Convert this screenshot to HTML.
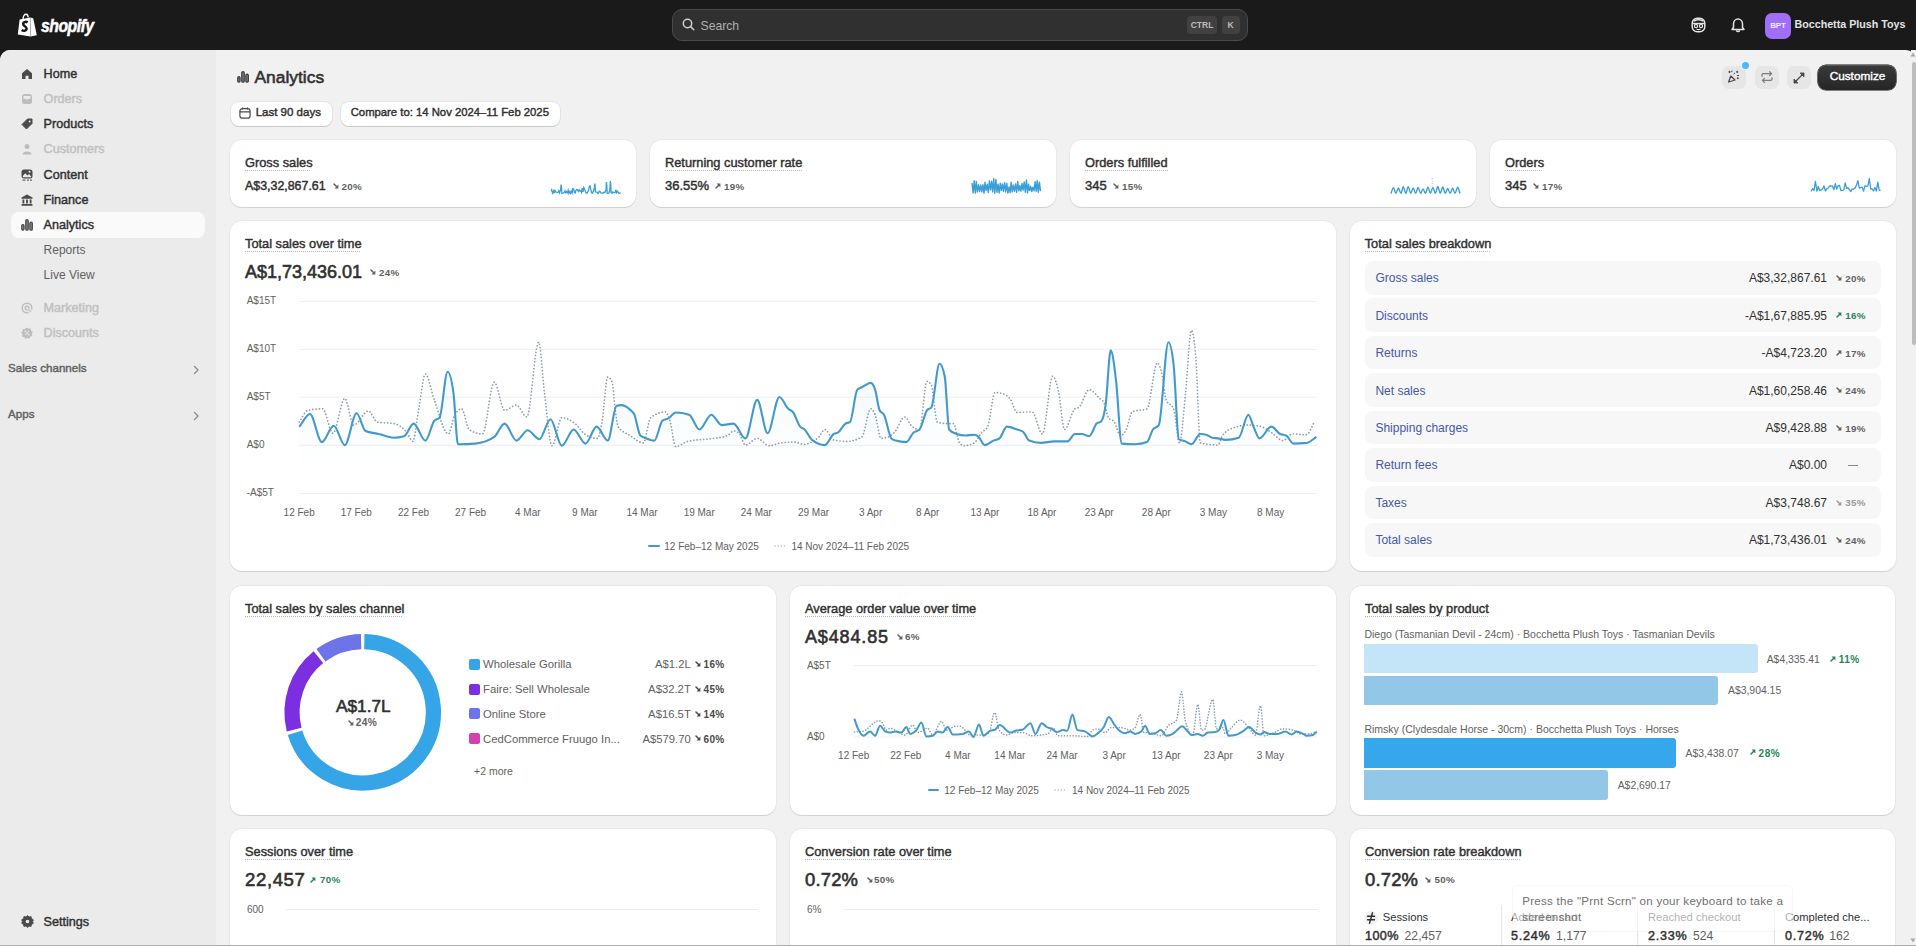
<!DOCTYPE html>
<html><head><meta charset="utf-8">
<style>
*{box-sizing:border-box;margin:0;padding:0}
html,body{width:1916px;height:946px;overflow:hidden}
body{background:#f1f1f1;font-family:"Liberation Sans",sans-serif;color:#303030;position:relative}
.abs{position:absolute}
.t{position:absolute;white-space:nowrap}
.card{position:absolute;background:#fff;border-radius:12px;box-shadow:0 1px 0 rgba(0,0,0,0.10),0 0 0 1px rgba(0,0,0,0.035)}
</style></head><body>

<div class="abs" style="left:0;top:0;width:1916px;height:60px;background:#1a1a1a"></div>
<div class="abs" style="left:0;top:50px;width:1916px;height:896px;background:#f1f1f1;border-radius:10px 10px 0 0;overflow:hidden"><div class="abs" style="left:0;top:0;width:216px;height:896px;background:#ebebeb"></div></div>
<svg class="abs" style="left:17px;top:13px" width="22" height="24" viewBox="0 0 22 24">
<path d="M2.6 6.4 L13.2 4.4 L13.6 23.4 L0.8 21.6 Z" fill="#fff"/>
<path d="M13.2 4.4 L16.2 5.2 L19.8 22.2 L13.6 23.4 Z" fill="#fff"/>
<path d="M6 6 C6.2 2.8 7.6 1.2 9.2 1.3 C10.4 1.4 11 2.6 11.2 4.4" stroke="#fff" stroke-width="1.4" fill="none"/>
<path d="M13.3 4.8 L13.6 23" stroke="#9a9a9a" stroke-width="0.5"/>
<path d="M10.6 9.4 C9.6 8.6 6.2 8.4 6.2 11 C6.2 13.2 9.6 13.2 9.6 15.6 C9.6 18 6.4 18.2 4.6 17" stroke="#1a1a1a" stroke-width="2.5" fill="none" stroke-linecap="butt"/>
</svg>
<div class="t" style="left:40.5px;top:17.0px;font-size:18.2px;line-height:18.2px;font-weight:700;color:#fff;font-style:italic;letter-spacing:-0.6px;transform:scaleX(0.87);transform-origin:0 0;-webkit-text-stroke:0.5px #fff">shopify</div>
<div class="abs" style="left:672px;top:9px;width:576px;height:32px;background:#303030;border:1px solid #4a4a4a;border-radius:10px"></div>
<svg class="abs" style="left:682px;top:18px" width="13" height="13" viewBox="0 0 13 13"><circle cx="5.5" cy="5.5" r="4.2" stroke="#cfcfcf" stroke-width="1.5" fill="none"/><path d="M8.6 8.6 L11.8 11.8" stroke="#cfcfcf" stroke-width="1.5" stroke-linecap="round"/></svg>
<div class="t" style="left:700.5px;top:20.0px;font-size:12.2px;line-height:12.2px;font-weight:400;color:#b0b0b0;">Search</div>
<div class="abs" style="left:1187px;top:16px;width:30px;height:18px;background:#414141;border-radius:4px"></div>
<div class="t" style="left:1002.0px;width:400px;text-align:center;top:21.0px;font-size:8.5px;line-height:8.5px;font-weight:700;color:#bdbdbd;">CTRL</div>
<div class="abs" style="left:1221.5px;top:16px;width:18px;height:18px;background:#414141;border-radius:4px"></div>
<div class="t" style="left:1030.5px;width:400px;text-align:center;top:21.0px;font-size:8.5px;line-height:8.5px;font-weight:700;color:#bdbdbd;">K</div>
<svg class="abs" style="left:1691px;top:17px" width="15" height="16" viewBox="0 0 15 16">
<rect x="1.2" y="1.2" width="12.6" height="13.6" rx="5" stroke="#e3e3e3" stroke-width="1.5" fill="none"/>
<path d="M1.6 6.5 H13.4" stroke="#e3e3e3" stroke-width="1.4"/>
<path d="M3 4 Q7.5 1.5 12 4" stroke="#e3e3e3" stroke-width="1.6" fill="none"/>
<circle cx="5" cy="9" r="1.6" stroke="#e3e3e3" stroke-width="1.2" fill="none"/><circle cx="10" cy="9" r="1.6" stroke="#e3e3e3" stroke-width="1.2" fill="none"/>
<path d="M5.5 12 Q7.5 13.3 9.5 12" stroke="#e3e3e3" stroke-width="1.2" fill="none"/>
</svg>
<svg class="abs" style="left:1731px;top:17px" width="14" height="16" viewBox="0 0 14 16">
<path d="M2.5 10.5 V7 C2.5 4.2 4.5 2 7 2 C9.5 2 11.5 4.2 11.5 7 V10.5 L13 12.5 H1 Z" stroke="#e3e3e3" stroke-width="1.5" fill="none" stroke-linejoin="round"/>
<path d="M5.2 13.5 Q7 15.5 8.8 13.5" stroke="#e3e3e3" stroke-width="1.5" fill="none"/>
</svg>
<div class="abs" style="left:1765px;top:12.5px;width:26px;height:26px;background:#a06ef7;border-radius:7px"></div>
<div class="t" style="left:1578.0px;width:400px;text-align:center;top:22.0px;font-size:8px;line-height:8px;font-weight:700;color:#f3eaff;letter-spacing:-0.2px">BPT</div>
<div class="t" style="left:1794.5px;top:19.0px;font-size:10.7px;line-height:10.7px;font-weight:700;color:#e3e3e3;">Bocchetta Plush Toys</div>
<div class="abs" style="left:11px;top:212px;width:194px;height:26px;background:#fafafa;border-radius:8px"></div>
<div class="t" style="left:43.6px;top:68.0px;font-size:12.6px;line-height:12.6px;font-weight:400;color:#303030;-webkit-text-stroke:0.42px #303030;">Home</div>
<svg class="abs" style="left:21px;top:68.1px" width="12" height="12" viewBox="0 0 12 12"><path d="M1 5.2 L6 1 L11 5.2 V11 H7.5 V7.8 H4.5 V11 H1 Z" fill="#4a4a4a"/></svg>
<div class="t" style="left:43.6px;top:93.0px;font-size:12.6px;line-height:12.6px;font-weight:400;color:#c0c0c0;-webkit-text-stroke:0.42px #c0c0c0;">Orders</div>
<svg class="abs" style="left:21px;top:93.1px" width="12" height="12" viewBox="0 0 12 12"><rect x="1" y="1" width="10" height="10" rx="2.5" fill="#bdbdbd"/><path d="M2.5 3 H9.5 V5.8 H7.3 L6 7 L4.7 5.8 H2.5 Z" fill="#ebebeb"/></svg>
<div class="t" style="left:43.6px;top:118.0px;font-size:12.6px;line-height:12.6px;font-weight:400;color:#303030;-webkit-text-stroke:0.42px #303030;">Products</div>
<svg class="abs" style="left:21px;top:118.1px" width="12" height="12" viewBox="0 0 12 12"><path d="M6.5 1 H11 V5.5 L5.5 11 L1 6.5 Z" fill="#4a4a4a" stroke="#4a4a4a" stroke-width="1" stroke-linejoin="round"/><circle cx="8.6" cy="3.4" r="1" fill="#ebebeb"/></svg>
<div class="t" style="left:43.6px;top:143.0px;font-size:12.6px;line-height:12.6px;font-weight:400;color:#c0c0c0;-webkit-text-stroke:0.42px #c0c0c0;">Customers</div>
<svg class="abs" style="left:21px;top:143.1px" width="12" height="12" viewBox="0 0 12 12"><circle cx="6" cy="3.5" r="2.5" fill="#bdbdbd"/><path d="M1.5 11.5 C1.5 7.5 10.5 7.5 10.5 11.5 Z" fill="#bdbdbd"/></svg>
<div class="t" style="left:43.6px;top:169.0px;font-size:12.6px;line-height:12.6px;font-weight:400;color:#303030;-webkit-text-stroke:0.42px #303030;">Content</div>
<svg class="abs" style="left:21px;top:169.1px" width="12" height="12" viewBox="0 0 12 12"><rect x="0.5" y="0.5" width="11" height="9" rx="2.5" fill="#4a4a4a"/><path d="M1.8 7 L4.2 4.2 L6.5 6.5 L8 5 L10.2 7.5 V8.3 H1.8 Z" fill="#ebebeb"/><circle cx="8.5" cy="2.8" r="1" fill="#ebebeb"/><rect x="1.5" y="10.6" width="3" height="1" fill="#4a4a4a"/><rect x="6" y="10.6" width="2" height="1" fill="#4a4a4a"/><rect x="9" y="10.6" width="2" height="1" fill="#4a4a4a"/></svg>
<div class="t" style="left:43.6px;top:194.0px;font-size:12.6px;line-height:12.6px;font-weight:400;color:#303030;-webkit-text-stroke:0.42px #303030;">Finance</div>
<svg class="abs" style="left:21px;top:194.1px" width="12" height="12" viewBox="0 0 12 12"><path d="M6 0.5 L11.5 3.5 V4.8 H0.5 V3.5 Z" fill="#4a4a4a"/><rect x="1.5" y="5.5" width="1.8" height="4" fill="#4a4a4a"/><rect x="5.1" y="5.5" width="1.8" height="4" fill="#4a4a4a"/><rect x="8.7" y="5.5" width="1.8" height="4" fill="#4a4a4a"/><rect x="0.5" y="10" width="11" height="1.8" rx="0.5" fill="#4a4a4a"/></svg>
<div class="t" style="left:43.6px;top:219.0px;font-size:12.6px;line-height:12.6px;font-weight:400;color:#303030;-webkit-text-stroke:0.42px #303030;">Analytics</div>
<svg class="abs" style="left:21px;top:219.3px" width="12" height="12" viewBox="0 0 12 12"><rect x="0.8" y="5.6" width="2.2" height="5.6" rx="1.1" fill="#8f8f8f" stroke="#4a4a4a" stroke-width="1.3"/><rect x="4.8" y="0.7" width="2.4" height="10.5" rx="1.2" fill="#8f8f8f" stroke="#4a4a4a" stroke-width="1.3"/><rect x="8.9" y="3.2" width="2.4" height="8" rx="1.2" fill="#8f8f8f" stroke="#4a4a4a" stroke-width="1.3"/></svg>
<div class="t" style="left:43.6px;top:244.0px;font-size:12px;line-height:12px;font-weight:400;color:#616161;">Reports</div>
<div class="t" style="left:43.6px;top:269.0px;font-size:12px;line-height:12px;font-weight:400;color:#616161;">Live View</div>
<div class="t" style="left:43.6px;top:302.0px;font-size:12.6px;line-height:12.6px;font-weight:400;color:#c0c0c0;-webkit-text-stroke:0.42px #c0c0c0;">Marketing</div>
<svg class="abs" style="left:21px;top:302.2px" width="12" height="12" viewBox="0 0 12 12"><circle cx="6" cy="6" r="4.8" stroke="#bdbdbd" stroke-width="1.5" fill="none"/><circle cx="6" cy="6" r="1.8" stroke="#bdbdbd" stroke-width="1.4" fill="none"/><path d="M6.5 6.5 L11.5 8 L9 9 L8 11.5 Z" fill="#bdbdbd" stroke="#ebebeb" stroke-width="0.8"/></svg>
<div class="t" style="left:43.6px;top:327.0px;font-size:12.6px;line-height:12.6px;font-weight:400;color:#c0c0c0;-webkit-text-stroke:0.42px #c0c0c0;">Discounts</div>
<svg class="abs" style="left:21px;top:327.2px" width="12" height="12" viewBox="0 0 12 12"><path d="M6 0.5 L7.6 1.8 L9.7 1.6 L10.2 3.7 L11.8 5 L10.8 6.8 L11.3 8.9 L9.3 9.6 L8.4 11.5 L6.3 11 L4.3 11.8 L3.3 9.9 L1.2 9.4 L1.4 7.3 L0.2 5.6 L1.7 4.1 L1.8 2 L3.9 1.9 Z" fill="#bdbdbd"/><path d="M4.2 7.8 L7.8 4.2" stroke="#ebebeb" stroke-width="1.1"/><circle cx="4.3" cy="4.3" r="0.9" fill="#ebebeb"/><circle cx="7.7" cy="7.7" r="0.9" fill="#ebebeb"/></svg>
<div class="t" style="left:8.0px;top:362.0px;font-size:11.6px;line-height:11.6px;font-weight:400;color:#616161;-webkit-text-stroke:0.42px #616161;">Sales channels</div>
<div class="t" style="left:8.0px;top:408.0px;font-size:11.6px;line-height:11.6px;font-weight:400;color:#616161;-webkit-text-stroke:0.42px #616161;">Apps</div>
<svg class="abs" style="left:192px;top:365px" width="8" height="10" viewBox="0 0 8 10"><path d="M2.5 1.5 L6 5 L2.5 8.5" stroke="#8a8a8a" stroke-width="1.3" fill="none" stroke-linecap="round" stroke-linejoin="round"/></svg>
<svg class="abs" style="left:192px;top:411px" width="8" height="10" viewBox="0 0 8 10"><path d="M2.5 1.5 L6 5 L2.5 8.5" stroke="#8a8a8a" stroke-width="1.3" fill="none" stroke-linecap="round" stroke-linejoin="round"/></svg>
<div class="t" style="left:43.6px;top:916.0px;font-size:12.6px;line-height:12.6px;font-weight:400;color:#303030;-webkit-text-stroke:0.42px #303030;">Settings</div>
<svg class="abs" style="left:20.5px;top:914.5px" width="13" height="13" viewBox="0 0 13 13"><path d="M6.5 0.5 L8 1.9 L10.1 1.6 L10.6 3.7 L12.4 4.8 L11.6 6.5 L12.4 8.2 L10.6 9.3 L10.1 11.4 L8 11.1 L6.5 12.5 L5 11.1 L2.9 11.4 L2.4 9.3 L0.6 8.2 L1.4 6.5 L0.6 4.8 L2.4 3.7 L2.9 1.6 L5 1.9 Z" fill="#4a4a4a" stroke="#4a4a4a" stroke-width="0.8" stroke-linejoin="round"/><circle cx="6.5" cy="6.5" r="1.8" fill="#ebebeb"/></svg>
<svg class="abs" style="left:237px;top:71px" width="12" height="12" viewBox="0 0 12 12"><rect x="0.8" y="5.6" width="2.2" height="5.6" rx="1.1" fill="#8f8f8f" stroke="#3a3a3a" stroke-width="1.3"/><rect x="4.8" y="0.7" width="2.4" height="10.5" rx="1.2" fill="#8f8f8f" stroke="#3a3a3a" stroke-width="1.3"/><rect x="8.9" y="3.2" width="2.4" height="8" rx="1.2" fill="#8f8f8f" stroke="#3a3a3a" stroke-width="1.3"/></svg>
<div class="t" style="left:254.5px;top:69.0px;font-size:17.4px;line-height:17.4px;font-weight:400;color:#303030;-webkit-text-stroke:0.55px #303030;">Analytics</div>
<div class="abs" style="left:1722px;top:65.5px;width:23.5px;height:23.5px;background:#e6e6e6;border-radius:7px"></div>
<div class="abs" style="left:1755px;top:65.5px;width:23.5px;height:23.5px;background:#e6e6e6;border-radius:7px"></div>
<div class="abs" style="left:1787px;top:65.5px;width:23.5px;height:23.5px;background:#e6e6e6;border-radius:7px"></div>
<div class="abs" style="left:1741.5px;top:61.8px;width:7.5px;height:7.5px;background:#56b6f2;border-radius:50%;box-shadow:0 0 0 1px #e8f6ff"></div>
<svg class="abs" style="left:1727px;top:70px" width="14" height="14" viewBox="0 0 14 14">
<path d="M1.6 12 L3.8 6 L8 10 Z" stroke="#4a4a4a" stroke-width="1.3" fill="none" stroke-linejoin="round"/>
<path d="M2.5 0.8 V3 M1.4 1.9 H3.6" stroke="#4a4a4a" stroke-width="1"/>
<path d="M5 0.5 L4.7 2.2" stroke="#4a4a4a" stroke-width="1"/>
<path d="M6.5 4 L8 3" stroke="#4a4a4a" stroke-width="1"/>
<path d="M10.2 0.8 V3 M9.1 1.9 H11.3" stroke="#4a4a4a" stroke-width="1"/>
<path d="M10 5.5 H12" stroke="#4a4a4a" stroke-width="1"/>
<path d="M10.8 7.2 V9.2 M9.8 8.2 H11.8" stroke="#4a4a4a" stroke-width="1"/>
</svg>
<svg class="abs" style="left:1759.5px;top:70px" width="14" height="14" viewBox="0 0 14 14">
<path d="M2 6.2 V5 C2 4.2 2.6 3.6 3.4 3.6 H11.4 M9.6 1.6 L11.6 3.6 L9.6 5.6" stroke="#7c7c7c" stroke-width="1.3" fill="none" stroke-linecap="round" stroke-linejoin="round"/>
<path d="M12 7.8 V9 C12 9.8 11.4 10.4 10.6 10.4 H2.6 M4.4 8.4 L2.4 10.4 L4.4 12.4" stroke="#7c7c7c" stroke-width="1.3" fill="none" stroke-linecap="round" stroke-linejoin="round"/>
</svg>
<svg class="abs" style="left:1791.5px;top:70.5px" width="14" height="14" viewBox="0 0 14 14">
<path d="M2.5 11.5 L11.5 2.5" stroke="#4a4a4a" stroke-width="1.3" stroke-linecap="round"/>
<path d="M8 2 H12 V6 Z M2 8 V12 H6 Z" fill="#4a4a4a" stroke="#4a4a4a" stroke-width="0.8" stroke-linejoin="round"/>
</svg>
<div class="abs" style="left:1818px;top:65px;width:78px;height:24.5px;background:linear-gradient(#3a3a3a,#262626);border-radius:8px;box-shadow:0 0 0 0.6px #111, inset 0 1px 0 #555"></div>
<div class="t" style="left:1657.5px;width:400px;text-align:center;top:71.0px;font-size:11.8px;line-height:11.8px;font-weight:400;color:#fff;-webkit-text-stroke:0.4px #fff;">Customize</div>
<div class="abs" style="left:230.5px;top:102px;width:101.5px;height:23.5px;background:#fff;border-radius:8px;box-shadow:0 1px 0 #c9c9c9,0 0 0 1px #e3e3e3"></div>
<svg class="abs" style="left:239px;top:106.5px" width="12" height="12" viewBox="0 0 12 12"><rect x="0.9" y="1.6" width="10.2" height="9.6" rx="2.5" stroke="#4a4a4a" stroke-width="1.2" fill="none"/><path d="M1 4.8 H11 M3.6 0.5 V2.4 M8.4 0.5 V2.4" stroke="#4a4a4a" stroke-width="1.2"/></svg>
<div class="t" style="left:255.7px;top:107.0px;font-size:11.5px;line-height:11.5px;font-weight:400;color:#303030;-webkit-text-stroke:0.42px #303030;">Last 90 days</div>
<div class="abs" style="left:340.5px;top:102px;width:219px;height:23.5px;background:#fff;border-radius:8px;box-shadow:0 1px 0 #c9c9c9,0 0 0 1px #e3e3e3"></div>
<div class="t" style="left:350.7px;top:107.0px;font-size:11.3px;line-height:11.3px;font-weight:400;color:#303030;-webkit-text-stroke:0.42px #303030;">Compare to: 14 Nov 2024–11 Feb 2025</div>
<div class="card" style="left:230px;top:140px;width:406px;height:66.5px"></div>
<div class="t" style="left:245.0px;top:157.0px;font-size:12.8px;line-height:12.8px;font-weight:400;color:#303030;-webkit-text-stroke:0.42px #303030;">Gross sales</div>
<div class="abs" style="left:245px;top:169.5px;width:65px;height:1px;background-image:linear-gradient(90deg,#b8b8b8 50%,transparent 50%);background-size:2px 1px"></div>
<div class="t" style="left:245.0px;top:180.0px;font-size:12.4px;line-height:12.4px;font-weight:400;color:#303030;-webkit-text-stroke:0.45px #303030;">A$3,32,867.61</div>
<svg class="abs" style="left:332.5px;top:183px" width="6" height="6" viewBox="0 0 6 6"><path d="M1 1 L3.8 3.8" stroke="#616161" stroke-width="1.5" stroke-linecap="round"/><path d="M5.4 1.6 V5.4 H1.6 Z" fill="#616161"/></svg>
<div class="t" style="left:341.5px;top:182.0px;font-size:9.8px;line-height:9.8px;font-weight:700;color:#616161;letter-spacing:0.25px">20%</div>
<div class="card" style="left:650px;top:140px;width:406px;height:66.5px"></div>
<div class="t" style="left:665.0px;top:157.0px;font-size:12.8px;line-height:12.8px;font-weight:400;color:#303030;-webkit-text-stroke:0.42px #303030;">Returning customer rate</div>
<div class="abs" style="left:665px;top:169.5px;width:137px;height:1px;background-image:linear-gradient(90deg,#b8b8b8 50%,transparent 50%);background-size:2px 1px"></div>
<div class="t" style="left:665.0px;top:179.0px;font-size:13px;line-height:13px;font-weight:400;color:#303030;-webkit-text-stroke:0.45px #303030;">36.55%</div>
<svg class="abs" style="left:715px;top:183px" width="6" height="6" viewBox="0 0 6 6"><path d="M1 5 L3.8 2.2" stroke="#616161" stroke-width="1.5" stroke-linecap="round"/><path d="M1.6 0.6 H5.4 V4.4 Z" fill="#616161"/></svg>
<div class="t" style="left:724.0px;top:182.0px;font-size:9.8px;line-height:9.8px;font-weight:700;color:#616161;letter-spacing:0.25px">19%</div>
<div class="card" style="left:1070px;top:140px;width:406px;height:66.5px"></div>
<div class="t" style="left:1085.0px;top:157.0px;font-size:12.8px;line-height:12.8px;font-weight:400;color:#303030;-webkit-text-stroke:0.42px #303030;">Orders fulfilled</div>
<div class="abs" style="left:1085px;top:169.5px;width:83px;height:1px;background-image:linear-gradient(90deg,#b8b8b8 50%,transparent 50%);background-size:2px 1px"></div>
<div class="t" style="left:1085.0px;top:179.0px;font-size:13px;line-height:13px;font-weight:400;color:#303030;-webkit-text-stroke:0.45px #303030;">345</div>
<svg class="abs" style="left:1113px;top:183px" width="6" height="6" viewBox="0 0 6 6"><path d="M1 1 L3.8 3.8" stroke="#616161" stroke-width="1.5" stroke-linecap="round"/><path d="M5.4 1.6 V5.4 H1.6 Z" fill="#616161"/></svg>
<div class="t" style="left:1122.0px;top:182.0px;font-size:9.8px;line-height:9.8px;font-weight:700;color:#616161;letter-spacing:0.25px">15%</div>
<div class="card" style="left:1490px;top:140px;width:406px;height:66.5px"></div>
<div class="t" style="left:1505.0px;top:157.0px;font-size:12.8px;line-height:12.8px;font-weight:400;color:#303030;-webkit-text-stroke:0.42px #303030;">Orders</div>
<div class="abs" style="left:1505px;top:169.5px;width:38px;height:1px;background-image:linear-gradient(90deg,#b8b8b8 50%,transparent 50%);background-size:2px 1px"></div>
<div class="t" style="left:1505.0px;top:179.0px;font-size:13px;line-height:13px;font-weight:400;color:#303030;-webkit-text-stroke:0.45px #303030;">345</div>
<svg class="abs" style="left:1533px;top:183px" width="6" height="6" viewBox="0 0 6 6"><path d="M1 1 L3.8 3.8" stroke="#616161" stroke-width="1.5" stroke-linecap="round"/><path d="M5.4 1.6 V5.4 H1.6 Z" fill="#616161"/></svg>
<div class="t" style="left:1542.0px;top:182.0px;font-size:9.8px;line-height:9.8px;font-weight:700;color:#616161;letter-spacing:0.25px">17%</div>
<svg class="abs" style="left:0;top:0" width="1916" height="946"><path d="M551.0 191.2 L551.7 189.7 L552.5 193.1 L553.4 191.1 L554.1 193.4 L554.9 189.6 L555.5 191.7 L556.4 192.1 L557.5 192.5 L558.2 192.3 L558.8 190.8 L559.6 192.9 L560.2 190.5 L560.6 190.1 L561.1 184.6 L561.5 187.2 L561.9 193.3 L563.0 193.2 L564.3 192.4 L565.0 190.8 L565.8 192.9 L566.6 191.6 L567.4 192.7 L568.2 190.3 L568.9 193.5 L569.8 191.5 L570.6 193.2 L571.3 191.2 L572.1 192.9 L572.7 188.7 L573.0 188.6 L573.6 189.1 L573.9 189.8 L574.3 192.2 L574.6 192.5 L575.3 192.9 L575.8 190.5 L576.2 190.2 L576.7 189.5 L577.6 189.8 L578.3 191.5 L579.2 189.8 L579.9 191.0 L580.7 190.8 L581.5 192.6 L582.3 188.0 L583.0 192.0 L583.8 187.6 L584.4 189.0 L584.7 189.4 L585.2 191.2 L585.5 191.5 L586.0 192.8 L586.9 193.4 L587.5 192.1 L587.8 191.9 L588.3 190.8 L588.6 190.6 L589.1 186.7 L589.4 186.4 L590.0 185.9 L590.3 186.7 L590.7 189.2 L591.0 189.8 L591.5 192.6 L591.8 192.9 L592.5 193.1 L593.0 191.9 L593.4 191.5 L593.9 189.2 L594.2 188.9 L594.7 183.6 L595.1 185.1 L595.4 191.5 L595.9 192.1 L596.5 192.2 L597.1 192.2 L597.4 192.4 L597.8 193.4 L598.4 192.9 L598.8 192.6 L599.3 191.2 L600.1 191.5 L600.5 191.8 L600.9 192.9 L601.7 193.1 L602.6 193.0 L603.5 193.0 L604.0 192.1 L604.5 192.1 L605.0 192.3 L605.5 190.8 L605.8 190.6 L606.1 188.7 L606.4 182.0 L606.8 185.5 L607.2 193.2 L608.1 193.3 L608.9 193.1 L609.3 191.5 L609.7 191.0 L610.4 181.0 L610.7 183.7 L611.1 192.7 L611.6 193.0 L612.0 193.3 L612.6 192.1 L613.0 192.2 L613.4 192.5 L613.8 192.6 L614.3 192.8 L615.2 192.5 L615.8 189.8 L616.2 191.2 L616.6 192.6 L617.4 191.2 L618.0 192.1 L618.4 192.2 L618.9 193.2 L619.8 193.1 L620.5 192.4" stroke="#3a9fd8" stroke-width="1.3" fill="none"/><path d="M972.0 183.0 L973.1 192.8 L974.2 180.8 L975.3 193.1 L976.3 181.5 L977.4 192.0 L978.5 184.8 L979.6 191.5 L980.7 184.9 L981.8 191.8 L982.9 184.7 L984.0 193.1 L985.0 182.3 L986.1 190.3 L987.2 184.3 L988.3 192.6 L989.4 180.9 L990.5 189.8 L991.6 181.3 L992.7 191.9 L993.7 178.6 L994.8 193.2 L995.9 179.4 L997.0 192.3 L998.1 184.2 L999.2 193.0 L1000.3 183.1 L1001.4 190.3 L1002.4 183.9 L1003.5 191.2 L1004.6 182.6 L1005.7 192.0 L1006.8 183.3 L1007.9 193.2 L1009.0 187.0 L1010.1 192.6 L1011.1 182.3 L1012.2 191.8 L1013.3 185.0 L1014.4 191.2 L1015.5 184.0 L1016.6 192.3 L1017.7 181.4 L1018.8 190.8 L1019.8 185.6 L1020.9 191.2 L1022.0 183.5 L1023.1 190.1 L1024.2 181.9 L1025.3 192.3 L1026.4 180.0 L1027.5 193.0 L1028.5 184.3 L1029.6 190.6 L1030.7 186.3 L1031.8 191.6 L1032.9 187.1 L1034.0 190.9 L1035.1 181.7 L1036.2 191.3 L1037.2 180.8 L1038.3 192.2 L1039.4 182.2 L1040.5 191.2" stroke="#3a9fd8" stroke-width="1.4" fill="none" stroke-linejoin="round"/><path d="M1391.0 193.4 C1391.8 191.5 1392.6 187.6 1393.5 187.6 C1394.3 187.6 1395.1 193.4 1395.9 193.4 C1396.8 193.4 1397.6 187.9 1398.4 187.9 C1399.2 187.9 1400.0 193.4 1400.9 193.4 C1401.7 193.4 1402.5 186.8 1403.3 186.8 C1404.1 186.8 1405.0 193.4 1405.8 193.4 C1406.6 193.4 1407.4 186.6 1408.2 186.6 C1409.1 186.6 1409.9 193.4 1410.7 193.4 C1411.5 193.4 1412.4 187.9 1413.2 187.9 C1414.0 187.9 1414.8 193.4 1415.6 193.4 C1416.5 193.4 1417.3 187.3 1418.1 187.3 C1418.9 187.3 1419.8 193.4 1420.6 193.4 C1421.4 193.4 1422.2 189.0 1423.0 189.0 C1423.9 189.0 1424.7 193.4 1425.5 193.4 C1426.3 193.4 1427.1 187.2 1428.0 187.2 C1428.8 187.2 1429.6 193.4 1430.4 193.4 C1431.2 193.4 1432.1 187.4 1432.9 187.4 C1433.7 187.4 1434.5 193.4 1435.4 193.4 C1436.2 193.4 1437.0 186.4 1437.8 186.4 C1438.6 186.4 1439.5 193.4 1440.3 193.4 C1441.1 193.4 1441.9 186.9 1442.8 186.9 C1443.6 186.9 1444.4 193.4 1445.2 193.4 C1446.0 193.4 1446.9 188.4 1447.7 188.4 C1448.5 188.4 1449.3 193.4 1450.1 193.4 C1451.0 193.4 1451.8 188.1 1452.6 188.1 C1453.4 188.1 1454.2 193.4 1455.1 193.4 C1455.9 193.4 1456.7 187.3 1457.5 187.3 C1458.4 187.3 1459.2 191.4 1460.0 193.4" stroke="#3a9fd8" stroke-width="1.4" fill="none"/><path d="M1432.2 178 V187" stroke="#a8bccb" stroke-width="1" stroke-dasharray="1 1.5"/><path d="M1811.2 191.4 L1812.6 188.5 L1814.0 190.5 L1815.4 181.4 L1816.9 191.2 L1818.3 186.5 L1819.7 190.7 L1821.1 189.9 L1822.5 189.0 L1823.9 185.9 L1825.4 191.0 L1826.8 188.6 L1828.2 188.0 L1829.6 185.8 L1831.0 186.2 L1832.4 185.9 L1833.9 189.7 L1835.3 183.6 L1836.7 189.2 L1838.1 185.8 L1839.5 185.3 L1840.9 190.6 L1842.4 190.4 L1843.8 190.0 L1845.2 182.8 L1846.6 188.4 L1848.0 187.7 L1849.4 189.8 L1850.9 191.5 L1852.3 188.8 L1853.7 189.1 L1855.1 187.9 L1856.5 185.3 L1857.9 180.7 L1859.4 188.2 L1860.8 187.5 L1862.2 187.1 L1863.6 191.2 L1865.0 185.7 L1866.4 186.5 L1867.9 185.8 L1869.3 178.5 L1870.7 189.0 L1872.1 188.9 L1873.5 190.9 L1874.9 187.4 L1876.4 191.1 L1877.8 182.1 L1879.2 190.2 L1880.6 190.5" stroke="#3a9fd8" stroke-width="1.3" fill="none" stroke-linejoin="round"/></svg>
<div class="card" style="left:230px;top:221px;width:1106px;height:349.5px"></div>
<div class="t" style="left:245.0px;top:238.0px;font-size:12.8px;line-height:12.8px;font-weight:400;color:#303030;-webkit-text-stroke:0.42px #303030;">Total sales over time</div>
<div class="abs" style="left:245px;top:250.5px;width:115.6px;height:1px;background-image:linear-gradient(90deg,#b8b8b8 50%,transparent 50%);background-size:2px 1px"></div>
<div class="t" style="left:245.0px;top:263.0px;font-size:18px;line-height:18px;font-weight:400;color:#303030;-webkit-text-stroke:0.6px #303030;">A$1,73,436.01</div>
<svg class="abs" style="left:369.5px;top:269px" width="6" height="6" viewBox="0 0 6 6"><path d="M1 1 L3.8 3.8" stroke="#616161" stroke-width="1.5" stroke-linecap="round"/><path d="M5.4 1.6 V5.4 H1.6 Z" fill="#616161"/></svg>
<div class="t" style="left:379.0px;top:268.0px;font-size:9.8px;line-height:9.8px;font-weight:700;color:#616161;letter-spacing:0.25px">24%</div>
<div class="t" style="left:246.7px;top:296.0px;font-size:10px;line-height:10px;font-weight:400;color:#616161;">A$15T</div>
<div class="t" style="left:246.7px;top:344.0px;font-size:10px;line-height:10px;font-weight:400;color:#616161;">A$10T</div>
<div class="t" style="left:246.7px;top:392.0px;font-size:10px;line-height:10px;font-weight:400;color:#616161;">A$5T</div>
<div class="t" style="left:246.7px;top:440.0px;font-size:10px;line-height:10px;font-weight:400;color:#616161;">A$0</div>
<div class="t" style="left:246.7px;top:488.0px;font-size:10px;line-height:10px;font-weight:400;color:#616161;">-A$5T</div>
<div class="t" style="left:99.2px;width:400px;text-align:center;top:508.0px;font-size:10px;line-height:10px;font-weight:400;color:#616161;">12 Feb</div>
<div class="t" style="left:156.3px;width:400px;text-align:center;top:508.0px;font-size:10px;line-height:10px;font-weight:400;color:#616161;">17 Feb</div>
<div class="t" style="left:213.5px;width:400px;text-align:center;top:508.0px;font-size:10px;line-height:10px;font-weight:400;color:#616161;">22 Feb</div>
<div class="t" style="left:270.6px;width:400px;text-align:center;top:508.0px;font-size:10px;line-height:10px;font-weight:400;color:#616161;">27 Feb</div>
<div class="t" style="left:327.8px;width:400px;text-align:center;top:508.0px;font-size:10px;line-height:10px;font-weight:400;color:#616161;">4 Mar</div>
<div class="t" style="left:384.9px;width:400px;text-align:center;top:508.0px;font-size:10px;line-height:10px;font-weight:400;color:#616161;">9 Mar</div>
<div class="t" style="left:442.0px;width:400px;text-align:center;top:508.0px;font-size:10px;line-height:10px;font-weight:400;color:#616161;">14 Mar</div>
<div class="t" style="left:499.2px;width:400px;text-align:center;top:508.0px;font-size:10px;line-height:10px;font-weight:400;color:#616161;">19 Mar</div>
<div class="t" style="left:556.3px;width:400px;text-align:center;top:508.0px;font-size:10px;line-height:10px;font-weight:400;color:#616161;">24 Mar</div>
<div class="t" style="left:613.5px;width:400px;text-align:center;top:508.0px;font-size:10px;line-height:10px;font-weight:400;color:#616161;">29 Mar</div>
<div class="t" style="left:670.6px;width:400px;text-align:center;top:508.0px;font-size:10px;line-height:10px;font-weight:400;color:#616161;">3 Apr</div>
<div class="t" style="left:727.7px;width:400px;text-align:center;top:508.0px;font-size:10px;line-height:10px;font-weight:400;color:#616161;">8 Apr</div>
<div class="t" style="left:784.9px;width:400px;text-align:center;top:508.0px;font-size:10px;line-height:10px;font-weight:400;color:#616161;">13 Apr</div>
<div class="t" style="left:842.0px;width:400px;text-align:center;top:508.0px;font-size:10px;line-height:10px;font-weight:400;color:#616161;">18 Apr</div>
<div class="t" style="left:899.2px;width:400px;text-align:center;top:508.0px;font-size:10px;line-height:10px;font-weight:400;color:#616161;">23 Apr</div>
<div class="t" style="left:956.3px;width:400px;text-align:center;top:508.0px;font-size:10px;line-height:10px;font-weight:400;color:#616161;">28 Apr</div>
<div class="t" style="left:1013.4px;width:400px;text-align:center;top:508.0px;font-size:10px;line-height:10px;font-weight:400;color:#616161;">3 May</div>
<div class="t" style="left:1070.6px;width:400px;text-align:center;top:508.0px;font-size:10px;line-height:10px;font-weight:400;color:#616161;">8 May</div>
<svg class="abs" style="left:0;top:0" width="1916" height="946"><path d="M299 301.3 H1317" stroke="#eeeeee" stroke-width="1"/><path d="M299 349.3 H1317" stroke="#eeeeee" stroke-width="1"/><path d="M299 397.2 H1317" stroke="#eeeeee" stroke-width="1"/><path d="M299 445.3 H1317" stroke="#eeeeee" stroke-width="1"/><path d="M299 493.4 H1317" stroke="#eeeeee" stroke-width="1"/><defs><linearGradient id="ga" x1="0" y1="0" x2="0" y2="1"><stop offset="0" stop-color="#3a9fd8" stop-opacity="0.07"/><stop offset="1" stop-color="#3a9fd8" stop-opacity="0.0"/></linearGradient></defs><path d="M299.2 426.9 C302.8 422.6 306.4 414.0 310.0 414.0 C313.9 414.0 317.9 442.1 321.8 442.1 C325.8 442.1 329.7 425.8 333.7 425.8 C337.4 425.8 341.1 445.1 344.8 445.1 C348.7 445.1 352.7 413.3 356.6 413.3 C359.6 413.3 362.5 429.7 365.5 431.0 C369.9 433.0 374.4 432.9 378.8 434.0 C383.7 435.1 388.7 437.7 393.6 437.7 C397.1 437.7 400.5 437.2 404.0 436.2 C407.2 435.3 410.4 423.6 413.6 423.6 C417.5 423.6 421.5 440.6 425.4 440.6 C428.4 440.6 431.4 424.0 434.3 420.7 C436.0 418.7 437.8 419.7 439.5 417.7 C442.2 414.6 444.9 371.8 447.6 371.8 C449.6 371.8 451.6 379.2 453.6 394.0 C455.0 405.1 456.5 444.3 458.0 444.3 C463.7 444.3 469.3 444.1 475.0 443.6 C481.4 443.0 487.8 441.4 494.3 436.9 C497.7 434.5 501.2 423.6 504.6 423.6 C508.6 423.6 512.5 440.6 516.5 440.6 C520.2 440.6 523.9 430.3 527.6 430.3 C531.5 430.3 535.5 439.2 539.4 439.2 C543.1 439.2 546.8 419.2 550.5 419.2 C554.3 419.2 558.1 445.8 561.8 445.8 C565.8 445.8 569.7 429.5 573.7 429.5 C577.6 429.5 581.6 443.6 585.5 443.6 C589.2 443.6 592.9 426.6 596.6 426.6 C600.3 426.6 604.0 440.6 607.7 440.6 C610.7 440.6 613.6 406.8 616.6 405.8 C618.1 405.4 619.6 405.1 621.0 405.1 C624.0 405.1 627.0 406.8 629.9 409.6 C631.4 410.9 632.9 411.5 634.4 414.7 C636.3 419.0 638.3 433.5 640.3 435.5 C641.8 436.9 643.3 437.0 644.7 437.7 C647.9 439.1 651.1 440.6 654.4 440.6 C657.1 440.6 659.8 422.7 662.5 420.7 C664.5 419.2 666.4 419.5 668.4 418.4 C670.9 417.0 673.3 412.5 675.8 412.5 C680.3 412.5 684.7 413.3 689.1 414.7 C692.6 415.9 696.0 429.5 699.5 429.5 C703.4 429.5 707.4 414.7 711.3 414.7 C714.8 414.7 718.2 425.1 721.7 425.1 C725.6 425.1 729.6 423.6 733.5 423.6 C737.5 423.6 741.4 438.4 745.4 438.4 C749.3 438.4 753.3 399.9 757.2 399.9 C760.7 399.9 764.1 433.2 767.6 433.2 C771.5 433.2 775.5 397.0 779.4 397.0 C782.4 397.0 785.3 406.2 788.3 408.8 C789.8 410.1 791.3 410.0 792.7 411.8 C795.2 414.6 797.7 423.7 800.1 426.6 C801.6 428.3 803.1 428.1 804.6 429.5 C807.1 431.9 809.5 437.9 812.0 439.9 C816.3 443.3 820.5 445.1 824.8 445.1 C827.8 445.1 830.7 435.9 833.7 434.0 C835.2 433.0 836.6 433.5 838.1 432.5 C840.6 430.9 843.1 425.2 845.5 423.6 C847.0 422.6 848.5 423.1 850.0 422.1 C852.4 420.5 854.9 392.0 857.4 389.6 C858.8 388.1 860.3 388.1 861.8 387.3 C864.8 385.9 867.7 382.9 870.7 382.9 C872.2 382.9 873.6 385.1 875.1 389.6 C876.6 394.0 878.1 407.3 879.6 410.3 C881.0 413.3 882.5 412.0 884.0 414.7 C886.5 419.2 888.9 435.9 891.4 438.4 C892.9 439.9 894.4 440.2 895.8 440.6 C899.3 441.6 902.8 442.1 906.2 442.1 C908.7 442.1 911.1 434.6 913.6 432.5 C915.6 430.8 917.6 431.5 919.5 429.5 C922.0 427.1 924.5 413.6 926.9 410.3 C928.4 408.3 929.9 409.3 931.4 407.3 C934.1 403.7 936.8 363.7 939.5 363.7 C941.2 363.7 943.0 367.9 944.7 376.2 C946.2 383.4 947.7 427.8 949.1 429.5 C951.6 432.5 954.1 433.2 956.5 434.0 C959.5 435.0 962.5 435.5 965.4 435.5 C968.4 435.5 971.3 434.7 974.3 434.7 C975.8 434.7 977.3 435.6 978.7 436.9 C980.7 438.7 982.7 445.1 984.7 445.1 C987.6 445.1 990.6 441.9 993.5 440.6 C995.5 439.8 997.5 439.9 999.5 438.4 C1001.9 436.6 1004.4 426.6 1006.9 426.6 C1010.3 426.6 1013.8 428.3 1017.2 429.5 C1019.2 430.2 1021.2 430.3 1023.1 431.8 C1025.1 433.2 1027.1 439.9 1029.1 440.6 C1033.0 442.1 1037.0 442.9 1040.9 442.9 C1045.3 442.9 1049.8 441.4 1054.2 441.4 C1058.7 441.4 1063.1 441.4 1067.5 441.4 C1070.0 441.4 1072.5 434.0 1074.9 434.0 C1077.2 434.0 1079.5 434.0 1081.8 434.0 C1084.3 434.0 1086.8 436.2 1089.2 436.2 C1091.7 436.2 1094.2 426.0 1096.6 423.6 C1098.1 422.2 1099.6 422.9 1101.1 421.4 C1102.6 419.9 1104.0 416.0 1105.5 405.8 C1107.3 394.1 1109.0 350.3 1110.7 350.3 C1112.4 350.3 1114.2 365.3 1115.9 379.2 C1117.9 395.1 1119.8 443.4 1121.8 443.6 C1126.2 444.1 1130.7 444.3 1135.1 444.3 C1139.1 444.3 1143.0 443.6 1147.0 442.1 C1148.9 441.4 1150.9 432.4 1152.9 429.5 C1154.9 426.7 1156.8 428.1 1158.8 425.1 C1162.0 420.3 1165.2 342.2 1168.4 342.2 C1170.2 342.2 1171.9 349.6 1173.6 364.4 C1175.3 379.2 1177.1 438.0 1178.8 439.2 C1181.0 440.6 1183.2 440.4 1185.5 441.4 C1187.4 442.2 1189.4 444.3 1191.4 444.3 C1194.3 444.3 1197.3 434.0 1200.3 434.0 C1202.2 434.0 1204.2 434.2 1206.2 434.7 C1208.1 435.2 1210.1 437.2 1212.1 437.7 C1214.1 438.2 1216.0 438.1 1218.0 438.4 C1220.5 438.8 1223.0 439.9 1225.4 439.9 C1229.9 439.9 1234.3 439.2 1238.7 437.7 C1241.9 436.6 1245.2 414.7 1248.4 414.7 C1250.1 414.7 1251.8 422.9 1253.5 426.6 C1255.5 430.8 1257.5 438.4 1259.5 438.4 C1263.4 438.4 1267.4 426.6 1271.3 426.6 C1274.3 426.6 1277.2 432.5 1280.2 434.0 C1282.2 434.9 1284.1 434.5 1286.1 435.5 C1288.6 436.7 1291.0 443.6 1293.5 443.6 C1297.9 443.6 1302.4 443.3 1306.8 442.9 C1310.0 442.5 1313.2 438.9 1316.4 436.9 L1316.4 470 L299.2 470 Z" fill="url(#ga)"/><path d="M299.2 422.1 C302.0 418.2 304.9 410.9 307.8 410.3 C312.7 409.3 317.6 408.8 322.6 408.8 C326.0 408.8 329.5 433.2 332.9 433.2 C336.9 433.2 340.8 398.4 344.8 398.4 C347.7 398.4 350.7 425.1 353.6 425.1 C358.6 425.1 363.5 411.0 368.4 411.0 C371.4 411.0 374.4 421.6 377.3 422.1 C382.8 423.1 388.2 422.6 393.6 423.6 C398.1 424.4 402.5 427.0 406.9 432.5 C408.9 434.9 410.9 441.4 412.9 441.4 C414.8 441.4 416.8 419.4 418.8 408.8 C421.0 396.9 423.2 374.0 425.4 374.0 C428.4 374.0 431.4 391.9 434.3 399.9 C439.0 412.7 443.7 434.0 448.4 434.0 C450.4 434.0 452.3 420.2 454.3 416.2 C456.8 411.3 459.2 408.8 461.7 408.8 C464.2 408.8 466.6 427.9 469.1 429.5 C473.5 432.5 478.0 434.0 482.4 434.0 C486.4 434.0 490.3 382.2 494.3 382.2 C497.7 382.2 501.2 410.3 504.6 410.3 C508.6 410.3 512.5 405.1 516.5 405.1 C519.9 405.1 523.4 417.0 526.8 417.0 C530.8 417.0 534.7 342.2 538.7 342.2 C540.6 342.2 542.6 378.3 544.6 394.0 C547.1 413.7 549.5 445.8 552.0 445.8 C555.3 445.8 558.6 417.7 561.8 417.7 C566.3 417.7 570.7 420.1 575.2 423.6 C578.6 426.4 582.1 432.6 585.5 434.7 C589.5 437.2 593.4 438.4 597.4 438.4 C598.8 438.4 600.3 431.4 601.8 423.6 C603.8 413.2 605.8 377.0 607.7 377.0 C609.2 377.0 610.7 378.7 612.2 382.2 C613.2 384.5 614.1 401.4 615.1 408.8 C616.1 416.2 617.1 425.1 618.1 426.6 C622.0 432.5 626.0 432.9 629.9 435.5 C634.4 438.4 638.8 442.9 643.3 442.9 C645.7 442.9 648.2 419.7 650.7 417.7 C655.6 413.7 660.5 411.8 665.5 411.8 C666.9 411.8 668.4 416.2 669.9 420.7 C671.9 426.6 673.8 446.6 675.8 446.6 C679.8 446.6 683.7 442.3 687.7 441.4 C696.0 439.4 704.4 439.8 712.8 438.4 C717.8 437.6 722.7 437.4 727.6 435.5 C729.6 434.7 731.6 431.0 733.5 431.0 C735.5 431.0 737.5 432.0 739.5 434.0 C741.4 435.9 743.4 445.1 745.4 445.1 C749.3 445.1 753.3 438.4 757.2 438.4 C761.2 438.4 765.1 445.8 769.1 445.8 C773.0 445.8 777.0 443.3 780.9 442.9 C785.3 442.4 789.8 442.1 794.2 442.1 C797.7 442.1 801.1 444.3 804.6 444.3 C806.4 444.3 808.2 443.6 810.0 442.9 C813.0 441.6 815.9 439.9 818.9 436.9 C820.9 434.9 822.8 429.5 824.8 429.5 C827.8 429.5 830.7 439.2 833.7 439.9 C838.1 440.9 842.6 441.4 847.0 441.4 C851.9 441.4 856.9 439.9 861.8 436.9 C864.8 435.2 867.7 408.8 870.7 408.8 C872.2 408.8 873.6 411.1 875.1 414.7 C877.1 419.6 879.1 438.4 881.0 438.4 C883.5 438.4 886.0 437.9 888.4 436.9 C890.4 436.1 892.4 434.5 894.4 432.5 C897.8 429.0 901.3 417.0 904.7 417.0 C907.2 417.0 909.7 424.6 912.1 426.6 C914.6 428.5 917.1 429.5 919.5 429.5 C922.0 429.5 924.5 381.4 926.9 381.4 C928.4 381.4 929.9 382.7 931.4 385.1 C933.3 388.4 935.3 421.5 937.3 422.1 C940.3 423.1 943.2 423.6 946.2 423.6 C948.6 423.6 951.1 423.6 953.6 423.6 C955.5 423.6 957.5 440.2 959.5 442.9 C961.0 444.8 962.5 445.8 963.9 445.8 C967.4 445.8 970.8 444.8 974.3 442.9 C976.8 441.4 979.2 435.4 981.7 432.5 C983.7 430.2 985.6 430.5 987.6 426.6 C990.1 421.6 992.6 392.5 995.0 392.5 C997.0 392.5 999.0 392.8 1000.9 393.3 C1003.9 394.0 1006.9 395.0 1009.8 398.4 C1012.3 401.3 1014.8 412.5 1017.2 412.5 C1022.2 412.5 1027.1 411.8 1032.0 411.8 C1035.5 411.8 1038.9 434.0 1042.4 434.0 C1045.8 434.0 1049.3 376.2 1052.7 376.2 C1054.7 376.2 1056.7 383.6 1058.7 392.5 C1060.6 401.4 1062.6 429.5 1064.6 429.5 C1068.0 429.5 1071.5 411.4 1074.9 408.8 C1076.3 407.8 1077.6 408.3 1078.9 407.3 C1082.3 404.8 1085.8 389.6 1089.2 389.6 C1092.7 389.6 1096.1 395.1 1099.6 398.4 C1101.1 399.9 1102.6 399.9 1104.0 402.9 C1105.5 405.8 1107.0 415.5 1108.5 417.7 C1110.5 420.7 1112.4 419.2 1114.4 422.1 C1116.4 425.1 1118.4 435.5 1120.3 435.5 C1122.3 435.5 1124.3 433.5 1126.2 429.5 C1128.2 425.6 1130.2 412.6 1132.2 411.8 C1137.1 409.8 1142.0 410.8 1147.0 408.8 C1150.4 407.4 1153.9 362.9 1157.3 362.9 C1158.8 362.9 1160.3 367.1 1161.8 373.3 C1163.3 379.5 1164.7 396.4 1166.2 399.9 C1168.7 405.8 1171.1 402.9 1173.6 408.8 C1175.6 413.5 1177.6 442.9 1179.5 442.9 C1181.5 442.9 1183.5 412.8 1185.5 394.0 C1187.4 375.3 1189.4 330.4 1191.4 330.4 C1192.9 330.4 1194.3 339.2 1195.8 357.0 C1197.3 374.8 1198.8 442.5 1200.3 442.9 C1206.2 444.3 1212.1 445.1 1218.0 445.1 C1219.5 445.1 1221.0 437.6 1222.5 435.5 C1225.9 430.5 1229.4 429.3 1232.8 428.1 C1238.2 426.1 1243.7 425.1 1249.1 425.1 C1253.0 425.1 1257.0 425.6 1260.9 426.6 C1264.4 427.4 1267.8 430.3 1271.3 432.5 C1275.2 435.0 1279.2 440.6 1283.1 440.6 C1286.1 440.6 1289.1 434.0 1292.0 434.0 C1297.0 434.0 1301.9 434.7 1306.8 434.7 C1309.3 434.7 1311.8 426.3 1314.2 422.1" stroke="#8d9faa" stroke-width="1.7" fill="none" stroke-dasharray="0.1 3.2" stroke-linecap="round"/><path d="M299.2 426.9 C302.8 422.6 306.4 414.0 310.0 414.0 C313.9 414.0 317.9 442.1 321.8 442.1 C325.8 442.1 329.7 425.8 333.7 425.8 C337.4 425.8 341.1 445.1 344.8 445.1 C348.7 445.1 352.7 413.3 356.6 413.3 C359.6 413.3 362.5 429.7 365.5 431.0 C369.9 433.0 374.4 432.9 378.8 434.0 C383.7 435.1 388.7 437.7 393.6 437.7 C397.1 437.7 400.5 437.2 404.0 436.2 C407.2 435.3 410.4 423.6 413.6 423.6 C417.5 423.6 421.5 440.6 425.4 440.6 C428.4 440.6 431.4 424.0 434.3 420.7 C436.0 418.7 437.8 419.7 439.5 417.7 C442.2 414.6 444.9 371.8 447.6 371.8 C449.6 371.8 451.6 379.2 453.6 394.0 C455.0 405.1 456.5 444.3 458.0 444.3 C463.7 444.3 469.3 444.1 475.0 443.6 C481.4 443.0 487.8 441.4 494.3 436.9 C497.7 434.5 501.2 423.6 504.6 423.6 C508.6 423.6 512.5 440.6 516.5 440.6 C520.2 440.6 523.9 430.3 527.6 430.3 C531.5 430.3 535.5 439.2 539.4 439.2 C543.1 439.2 546.8 419.2 550.5 419.2 C554.3 419.2 558.1 445.8 561.8 445.8 C565.8 445.8 569.7 429.5 573.7 429.5 C577.6 429.5 581.6 443.6 585.5 443.6 C589.2 443.6 592.9 426.6 596.6 426.6 C600.3 426.6 604.0 440.6 607.7 440.6 C610.7 440.6 613.6 406.8 616.6 405.8 C618.1 405.4 619.6 405.1 621.0 405.1 C624.0 405.1 627.0 406.8 629.9 409.6 C631.4 410.9 632.9 411.5 634.4 414.7 C636.3 419.0 638.3 433.5 640.3 435.5 C641.8 436.9 643.3 437.0 644.7 437.7 C647.9 439.1 651.1 440.6 654.4 440.6 C657.1 440.6 659.8 422.7 662.5 420.7 C664.5 419.2 666.4 419.5 668.4 418.4 C670.9 417.0 673.3 412.5 675.8 412.5 C680.3 412.5 684.7 413.3 689.1 414.7 C692.6 415.9 696.0 429.5 699.5 429.5 C703.4 429.5 707.4 414.7 711.3 414.7 C714.8 414.7 718.2 425.1 721.7 425.1 C725.6 425.1 729.6 423.6 733.5 423.6 C737.5 423.6 741.4 438.4 745.4 438.4 C749.3 438.4 753.3 399.9 757.2 399.9 C760.7 399.9 764.1 433.2 767.6 433.2 C771.5 433.2 775.5 397.0 779.4 397.0 C782.4 397.0 785.3 406.2 788.3 408.8 C789.8 410.1 791.3 410.0 792.7 411.8 C795.2 414.6 797.7 423.7 800.1 426.6 C801.6 428.3 803.1 428.1 804.6 429.5 C807.1 431.9 809.5 437.9 812.0 439.9 C816.3 443.3 820.5 445.1 824.8 445.1 C827.8 445.1 830.7 435.9 833.7 434.0 C835.2 433.0 836.6 433.5 838.1 432.5 C840.6 430.9 843.1 425.2 845.5 423.6 C847.0 422.6 848.5 423.1 850.0 422.1 C852.4 420.5 854.9 392.0 857.4 389.6 C858.8 388.1 860.3 388.1 861.8 387.3 C864.8 385.9 867.7 382.9 870.7 382.9 C872.2 382.9 873.6 385.1 875.1 389.6 C876.6 394.0 878.1 407.3 879.6 410.3 C881.0 413.3 882.5 412.0 884.0 414.7 C886.5 419.2 888.9 435.9 891.4 438.4 C892.9 439.9 894.4 440.2 895.8 440.6 C899.3 441.6 902.8 442.1 906.2 442.1 C908.7 442.1 911.1 434.6 913.6 432.5 C915.6 430.8 917.6 431.5 919.5 429.5 C922.0 427.1 924.5 413.6 926.9 410.3 C928.4 408.3 929.9 409.3 931.4 407.3 C934.1 403.7 936.8 363.7 939.5 363.7 C941.2 363.7 943.0 367.9 944.7 376.2 C946.2 383.4 947.7 427.8 949.1 429.5 C951.6 432.5 954.1 433.2 956.5 434.0 C959.5 435.0 962.5 435.5 965.4 435.5 C968.4 435.5 971.3 434.7 974.3 434.7 C975.8 434.7 977.3 435.6 978.7 436.9 C980.7 438.7 982.7 445.1 984.7 445.1 C987.6 445.1 990.6 441.9 993.5 440.6 C995.5 439.8 997.5 439.9 999.5 438.4 C1001.9 436.6 1004.4 426.6 1006.9 426.6 C1010.3 426.6 1013.8 428.3 1017.2 429.5 C1019.2 430.2 1021.2 430.3 1023.1 431.8 C1025.1 433.2 1027.1 439.9 1029.1 440.6 C1033.0 442.1 1037.0 442.9 1040.9 442.9 C1045.3 442.9 1049.8 441.4 1054.2 441.4 C1058.7 441.4 1063.1 441.4 1067.5 441.4 C1070.0 441.4 1072.5 434.0 1074.9 434.0 C1077.2 434.0 1079.5 434.0 1081.8 434.0 C1084.3 434.0 1086.8 436.2 1089.2 436.2 C1091.7 436.2 1094.2 426.0 1096.6 423.6 C1098.1 422.2 1099.6 422.9 1101.1 421.4 C1102.6 419.9 1104.0 416.0 1105.5 405.8 C1107.3 394.1 1109.0 350.3 1110.7 350.3 C1112.4 350.3 1114.2 365.3 1115.9 379.2 C1117.9 395.1 1119.8 443.4 1121.8 443.6 C1126.2 444.1 1130.7 444.3 1135.1 444.3 C1139.1 444.3 1143.0 443.6 1147.0 442.1 C1148.9 441.4 1150.9 432.4 1152.9 429.5 C1154.9 426.7 1156.8 428.1 1158.8 425.1 C1162.0 420.3 1165.2 342.2 1168.4 342.2 C1170.2 342.2 1171.9 349.6 1173.6 364.4 C1175.3 379.2 1177.1 438.0 1178.8 439.2 C1181.0 440.6 1183.2 440.4 1185.5 441.4 C1187.4 442.2 1189.4 444.3 1191.4 444.3 C1194.3 444.3 1197.3 434.0 1200.3 434.0 C1202.2 434.0 1204.2 434.2 1206.2 434.7 C1208.1 435.2 1210.1 437.2 1212.1 437.7 C1214.1 438.2 1216.0 438.1 1218.0 438.4 C1220.5 438.8 1223.0 439.9 1225.4 439.9 C1229.9 439.9 1234.3 439.2 1238.7 437.7 C1241.9 436.6 1245.2 414.7 1248.4 414.7 C1250.1 414.7 1251.8 422.9 1253.5 426.6 C1255.5 430.8 1257.5 438.4 1259.5 438.4 C1263.4 438.4 1267.4 426.6 1271.3 426.6 C1274.3 426.6 1277.2 432.5 1280.2 434.0 C1282.2 434.9 1284.1 434.5 1286.1 435.5 C1288.6 436.7 1291.0 443.6 1293.5 443.6 C1297.9 443.6 1302.4 443.3 1306.8 442.9 C1310.0 442.5 1313.2 438.9 1316.4 436.9" stroke="#4499cb" stroke-width="2.1" fill="none" stroke-linejoin="round"/></svg>
<div class="abs" style="left:648px;top:545px;width:11.5px;height:2px;background:#4499cb;border-radius:1px"></div>
<div class="t" style="left:664.3px;top:542.0px;font-size:10px;line-height:10px;font-weight:400;color:#616161;">12 Feb–12 May 2025</div>
<svg class="abs" style="left:774px;top:544px" width="14" height="4"><path d="M1 2 H13" stroke="#9ab8cc" stroke-width="1.3" stroke-dasharray="0.1 3" stroke-linecap="round"/></svg>
<div class="t" style="left:791.4px;top:542.0px;font-size:10px;line-height:10px;font-weight:400;color:#616161;">14 Nov 2024–11 Feb 2025</div>
<div class="card" style="left:1350px;top:221px;width:546px;height:349.5px"></div>
<div class="t" style="left:1364.7px;top:238.0px;font-size:12.8px;line-height:12.8px;font-weight:400;color:#303030;-webkit-text-stroke:0.42px #303030;">Total sales breakdown</div>
<div class="abs" style="left:1364.7px;top:250.5px;width:126px;height:1px;background-image:linear-gradient(90deg,#b8b8b8 50%,transparent 50%);background-size:2px 1px"></div>
<div class="abs" style="left:1365px;top:261.0px;width:515.5px;height:33.5px;background:#f7f7f7;border-radius:8px"></div>
<div class="t" style="left:1375.4px;top:272.0px;font-size:12px;line-height:12px;font-weight:400;color:#4459a8;">Gross sales</div>
<div class="t" style="right:89.0px;top:272.0px;font-size:12px;line-height:12px;font-weight:400;color:#303030;text-align:right;">A$3,32,867.61</div>
<svg class="abs" style="left:1836.4px;top:275.0px" width="6" height="6" viewBox="0 0 6 6"><path d="M1 1 L3.8 3.8" stroke="#616161" stroke-width="1.5" stroke-linecap="round"/><path d="M5.4 1.6 V5.4 H1.6 Z" fill="#616161"/></svg>
<div class="t" style="left:1845.3px;top:274.0px;font-size:9.8px;line-height:9.8px;font-weight:700;color:#616161;letter-spacing:0.25px">20%</div>
<div class="abs" style="left:1365px;top:298.4px;width:515.5px;height:33.5px;background:#f7f7f7;border-radius:8px"></div>
<div class="t" style="left:1375.4px;top:310.0px;font-size:12px;line-height:12px;font-weight:400;color:#4459a8;">Discounts</div>
<div class="t" style="right:89.0px;top:310.0px;font-size:12px;line-height:12px;font-weight:400;color:#303030;text-align:right;">-A$1,67,885.95</div>
<svg class="abs" style="left:1836.4px;top:312.45px" width="6" height="6" viewBox="0 0 6 6"><path d="M1 5 L3.8 2.2" stroke="#29845a" stroke-width="1.5" stroke-linecap="round"/><path d="M1.6 0.6 H5.4 V4.4 Z" fill="#29845a"/></svg>
<div class="t" style="left:1845.3px;top:311.0px;font-size:9.8px;line-height:9.8px;font-weight:700;color:#29845a;letter-spacing:0.25px">16%</div>
<div class="abs" style="left:1365px;top:335.9px;width:515.5px;height:33.5px;background:#f7f7f7;border-radius:8px"></div>
<div class="t" style="left:1375.4px;top:347.0px;font-size:12px;line-height:12px;font-weight:400;color:#4459a8;">Returns</div>
<div class="t" style="right:89.0px;top:347.0px;font-size:12px;line-height:12px;font-weight:400;color:#303030;text-align:right;">-A$4,723.20</div>
<svg class="abs" style="left:1836.4px;top:349.9px" width="6" height="6" viewBox="0 0 6 6"><path d="M1 5 L3.8 2.2" stroke="#616161" stroke-width="1.5" stroke-linecap="round"/><path d="M1.6 0.6 H5.4 V4.4 Z" fill="#616161"/></svg>
<div class="t" style="left:1845.3px;top:349.0px;font-size:9.8px;line-height:9.8px;font-weight:700;color:#616161;letter-spacing:0.25px">17%</div>
<div class="abs" style="left:1365px;top:373.4px;width:515.5px;height:33.5px;background:#f7f7f7;border-radius:8px"></div>
<div class="t" style="left:1375.4px;top:385.0px;font-size:12px;line-height:12px;font-weight:400;color:#4459a8;">Net sales</div>
<div class="t" style="right:89.0px;top:385.0px;font-size:12px;line-height:12px;font-weight:400;color:#303030;text-align:right;">A$1,60,258.46</div>
<svg class="abs" style="left:1836.4px;top:387.35px" width="6" height="6" viewBox="0 0 6 6"><path d="M1 1 L3.8 3.8" stroke="#616161" stroke-width="1.5" stroke-linecap="round"/><path d="M5.4 1.6 V5.4 H1.6 Z" fill="#616161"/></svg>
<div class="t" style="left:1845.3px;top:386.0px;font-size:9.8px;line-height:9.8px;font-weight:700;color:#616161;letter-spacing:0.25px">24%</div>
<div class="abs" style="left:1365px;top:410.8px;width:515.5px;height:33.5px;background:#f7f7f7;border-radius:8px"></div>
<div class="t" style="left:1375.4px;top:422.0px;font-size:12px;line-height:12px;font-weight:400;color:#4459a8;">Shipping charges</div>
<div class="t" style="right:89.0px;top:422.0px;font-size:12px;line-height:12px;font-weight:400;color:#303030;text-align:right;">A$9,428.88</div>
<svg class="abs" style="left:1836.4px;top:424.8px" width="6" height="6" viewBox="0 0 6 6"><path d="M1 1 L3.8 3.8" stroke="#616161" stroke-width="1.5" stroke-linecap="round"/><path d="M5.4 1.6 V5.4 H1.6 Z" fill="#616161"/></svg>
<div class="t" style="left:1845.3px;top:424.0px;font-size:9.8px;line-height:9.8px;font-weight:700;color:#616161;letter-spacing:0.25px">19%</div>
<div class="abs" style="left:1365px;top:448.2px;width:515.5px;height:33.5px;background:#f7f7f7;border-radius:8px"></div>
<div class="t" style="left:1375.4px;top:459.0px;font-size:12px;line-height:12px;font-weight:400;color:#4459a8;">Return fees</div>
<div class="t" style="right:89.0px;top:459.0px;font-size:12px;line-height:12px;font-weight:400;color:#303030;text-align:right;">A$0.00</div>
<div class="abs" style="left:1848px;top:464.9px;width:10px;height:1.2px;background:#8a8a8a"></div>
<div class="abs" style="left:1365px;top:485.7px;width:515.5px;height:33.5px;background:#f7f7f7;border-radius:8px"></div>
<div class="t" style="left:1375.4px;top:497.0px;font-size:12px;line-height:12px;font-weight:400;color:#4459a8;">Taxes</div>
<div class="t" style="right:89.0px;top:497.0px;font-size:12px;line-height:12px;font-weight:400;color:#303030;text-align:right;">A$3,748.67</div>
<svg class="abs" style="left:1836.4px;top:499.70000000000005px" width="6" height="6" viewBox="0 0 6 6"><path d="M1 1 L3.8 3.8" stroke="#9a9a9a" stroke-width="1.5" stroke-linecap="round"/><path d="M5.4 1.6 V5.4 H1.6 Z" fill="#9a9a9a"/></svg>
<div class="t" style="left:1845.3px;top:498.0px;font-size:9.8px;line-height:9.8px;font-weight:700;color:#9a9a9a;letter-spacing:0.25px">35%</div>
<div class="abs" style="left:1365px;top:523.2px;width:515.5px;height:33.5px;background:#f7f7f7;border-radius:8px"></div>
<div class="t" style="left:1375.4px;top:534.0px;font-size:12px;line-height:12px;font-weight:400;color:#4459a8;">Total sales</div>
<div class="t" style="right:89.0px;top:534.0px;font-size:12px;line-height:12px;font-weight:400;color:#303030;text-align:right;">A$1,73,436.01</div>
<svg class="abs" style="left:1836.4px;top:537.1500000000001px" width="6" height="6" viewBox="0 0 6 6"><path d="M1 1 L3.8 3.8" stroke="#616161" stroke-width="1.5" stroke-linecap="round"/><path d="M5.4 1.6 V5.4 H1.6 Z" fill="#616161"/></svg>
<div class="t" style="left:1845.3px;top:536.0px;font-size:9.8px;line-height:9.8px;font-weight:700;color:#616161;letter-spacing:0.25px">24%</div>
<div class="card" style="left:230px;top:585.5px;width:546px;height:229px"></div>
<div class="t" style="left:245.0px;top:603.0px;font-size:12.8px;line-height:12.8px;font-weight:400;color:#303030;-webkit-text-stroke:0.42px #303030;">Total sales by sales channel</div>
<div class="abs" style="left:245px;top:615.5px;width:157px;height:1px;background-image:linear-gradient(90deg,#b8b8b8 50%,transparent 50%);background-size:2px 1px"></div>
<svg class="abs" style="left:0;top:0" width="1916" height="946"><path d="M364.30 641.62 A70.70 70.70 0 1 1 295.02 732.73" stroke="#36a5e8" stroke-width="15.2" fill="none"/><path d="M294.16 729.64 A70.70 70.70 0 0 1 318.40 657.20" stroke="#7b2fe0" stroke-width="15.2" fill="none"/><path d="M320.94 655.25 A70.70 70.70 0 0 1 361.10 641.62" stroke="#6d73e8" stroke-width="15.2" fill="none"/></svg>
<div class="t" style="left:163.3px;width:400px;text-align:center;top:698.0px;font-size:17.3px;line-height:17.3px;font-weight:400;color:#303030;-webkit-text-stroke:0.6px #303030;">A$1.7L</div>
<svg class="abs" style="left:347.5px;top:719.5px" width="6" height="6" viewBox="0 0 6 6"><path d="M1 1 L3.8 3.8" stroke="#616161" stroke-width="1.5" stroke-linecap="round"/><path d="M5.4 1.6 V5.4 H1.6 Z" fill="#616161"/></svg>
<div class="t" style="left:355.8px;top:718.0px;font-size:10.2px;line-height:10.2px;font-weight:700;color:#616161;letter-spacing:0.35px">24%</div>
<div class="abs" style="left:469px;top:658.7px;width:11px;height:11px;background:#36a5e8;border-radius:2px"></div>
<div class="t" style="left:483.0px;top:659.0px;font-size:11.3px;line-height:11.3px;font-weight:400;color:#616161;">Wholesale Gorilla</div>
<div class="t" style="right:1225.2px;top:659.0px;font-size:11.3px;line-height:11.3px;font-weight:400;color:#616161;text-align:right;">A$1.2L</div>
<svg class="abs" style="left:694.5px;top:661.0px" width="6" height="6" viewBox="0 0 6 6"><path d="M1 1 L3.8 3.8" stroke="#4a4a4a" stroke-width="1.5" stroke-linecap="round"/><path d="M5.4 1.6 V5.4 H1.6 Z" fill="#4a4a4a"/></svg>
<div class="t" style="left:703.5px;top:660.0px;font-size:10px;line-height:10px;font-weight:700;color:#4a4a4a;letter-spacing:0.35px">16%</div>
<div class="abs" style="left:469px;top:683.5px;width:11px;height:11px;background:#7b2fe0;border-radius:2px"></div>
<div class="t" style="left:483.0px;top:684.0px;font-size:11.3px;line-height:11.3px;font-weight:400;color:#616161;">Faire: Sell Wholesale</div>
<div class="t" style="right:1225.2px;top:684.0px;font-size:11.3px;line-height:11.3px;font-weight:400;color:#616161;text-align:right;">A$32.2T</div>
<svg class="abs" style="left:694.5px;top:685.8px" width="6" height="6" viewBox="0 0 6 6"><path d="M1 1 L3.8 3.8" stroke="#4a4a4a" stroke-width="1.5" stroke-linecap="round"/><path d="M5.4 1.6 V5.4 H1.6 Z" fill="#4a4a4a"/></svg>
<div class="t" style="left:703.5px;top:685.0px;font-size:10px;line-height:10px;font-weight:700;color:#4a4a4a;letter-spacing:0.35px">45%</div>
<div class="abs" style="left:469px;top:708.3px;width:11px;height:11px;background:#6d73e8;border-radius:2px"></div>
<div class="t" style="left:483.0px;top:709.0px;font-size:11.3px;line-height:11.3px;font-weight:400;color:#616161;">Online Store</div>
<div class="t" style="right:1225.2px;top:709.0px;font-size:11.3px;line-height:11.3px;font-weight:400;color:#616161;text-align:right;">A$16.5T</div>
<svg class="abs" style="left:694.5px;top:710.6px" width="6" height="6" viewBox="0 0 6 6"><path d="M1 1 L3.8 3.8" stroke="#4a4a4a" stroke-width="1.5" stroke-linecap="round"/><path d="M5.4 1.6 V5.4 H1.6 Z" fill="#4a4a4a"/></svg>
<div class="t" style="left:703.5px;top:710.0px;font-size:10px;line-height:10px;font-weight:700;color:#4a4a4a;letter-spacing:0.35px">14%</div>
<div class="abs" style="left:469px;top:733.1px;width:11px;height:11px;background:#d63fae;border-radius:2px"></div>
<div class="t" style="left:483.0px;top:734.0px;font-size:11.3px;line-height:11.3px;font-weight:400;color:#616161;">CedCommerce Fruugo In...</div>
<div class="t" style="right:1225.2px;top:734.0px;font-size:11.3px;line-height:11.3px;font-weight:400;color:#616161;text-align:right;">A$579.70</div>
<svg class="abs" style="left:694.5px;top:735.4px" width="6" height="6" viewBox="0 0 6 6"><path d="M1 1 L3.8 3.8" stroke="#4a4a4a" stroke-width="1.5" stroke-linecap="round"/><path d="M5.4 1.6 V5.4 H1.6 Z" fill="#4a4a4a"/></svg>
<div class="t" style="left:703.5px;top:735.0px;font-size:10px;line-height:10px;font-weight:700;color:#4a4a4a;letter-spacing:0.35px">60%</div>
<div class="t" style="left:474.0px;top:766.0px;font-size:10.5px;line-height:10.5px;font-weight:400;color:#616161;">+2 more</div>
<div class="card" style="left:790px;top:585.5px;width:546px;height:229px"></div>
<div class="t" style="left:805.0px;top:603.0px;font-size:12.8px;line-height:12.8px;font-weight:400;color:#303030;-webkit-text-stroke:0.42px #303030;">Average order value over time</div>
<div class="abs" style="left:805px;top:615.5px;width:168.5px;height:1px;background-image:linear-gradient(90deg,#b8b8b8 50%,transparent 50%);background-size:2px 1px"></div>
<div class="t" style="left:805.0px;top:628.0px;font-size:18px;line-height:18px;font-weight:400;color:#303030;-webkit-text-stroke:0.6px #303030;letter-spacing:0.85px">A$484.85</div>
<svg class="abs" style="left:897px;top:634px" width="6" height="6" viewBox="0 0 6 6"><path d="M1 1 L3.8 3.8" stroke="#616161" stroke-width="1.5" stroke-linecap="round"/><path d="M5.4 1.6 V5.4 H1.6 Z" fill="#616161"/></svg>
<div class="t" style="left:905.0px;top:632.0px;font-size:9.8px;line-height:9.8px;font-weight:700;color:#616161;letter-spacing:0.25px">6%</div>
<div class="t" style="left:806.9px;top:661.0px;font-size:10px;line-height:10px;font-weight:400;color:#616161;">A$5T</div>
<div class="t" style="left:806.9px;top:732.0px;font-size:10px;line-height:10px;font-weight:400;color:#616161;">A$0</div>
<div class="t" style="left:653.7px;width:400px;text-align:center;top:751.0px;font-size:10px;line-height:10px;font-weight:400;color:#616161;">12 Feb</div>
<div class="t" style="left:705.8px;width:400px;text-align:center;top:751.0px;font-size:10px;line-height:10px;font-weight:400;color:#616161;">22 Feb</div>
<div class="t" style="left:757.9px;width:400px;text-align:center;top:751.0px;font-size:10px;line-height:10px;font-weight:400;color:#616161;">4 Mar</div>
<div class="t" style="left:809.9px;width:400px;text-align:center;top:751.0px;font-size:10px;line-height:10px;font-weight:400;color:#616161;">14 Mar</div>
<div class="t" style="left:862.0px;width:400px;text-align:center;top:751.0px;font-size:10px;line-height:10px;font-weight:400;color:#616161;">24 Mar</div>
<div class="t" style="left:914.1px;width:400px;text-align:center;top:751.0px;font-size:10px;line-height:10px;font-weight:400;color:#616161;">3 Apr</div>
<div class="t" style="left:966.2px;width:400px;text-align:center;top:751.0px;font-size:10px;line-height:10px;font-weight:400;color:#616161;">13 Apr</div>
<div class="t" style="left:1018.3px;width:400px;text-align:center;top:751.0px;font-size:10px;line-height:10px;font-weight:400;color:#616161;">23 Apr</div>
<div class="t" style="left:1070.3px;width:400px;text-align:center;top:751.0px;font-size:10px;line-height:10px;font-weight:400;color:#616161;">3 May</div>
<svg class="abs" style="left:0;top:0" width="1916" height="946"><path d="M853.7 665.6 H1317" stroke="#eeeeee" stroke-width="1"/><path d="M853.7 737 H1317" stroke="#eeeeee" stroke-width="1"/><path d="M854.4 732.0 C857.1 731.8 859.8 731.8 862.5 731.4 C868.0 730.5 873.4 720.7 878.8 720.7 C880.1 720.7 881.3 721.7 882.6 723.2 C883.8 724.8 885.1 730.1 886.3 730.1 C887.6 730.1 888.8 728.2 890.1 728.2 C895.1 728.2 900.1 735.1 905.1 735.1 C907.6 735.1 910.1 725.1 912.6 725.1 C914.3 725.1 916.0 732.6 917.7 732.6 C921.0 732.6 924.3 728.2 927.7 728.2 C929.3 728.2 931.0 735.1 932.7 735.1 C935.6 735.1 938.5 721.3 941.5 721.3 C943.1 721.3 944.8 730.1 946.5 730.1 C949.4 730.1 952.3 726.3 955.2 726.3 C956.9 726.3 958.6 726.3 960.2 726.3 C963.6 726.3 966.9 735.1 970.3 735.1 C974.4 735.1 978.6 735.1 982.8 735.1 C984.9 735.1 987.0 734.3 989.1 732.6 C990.9 731.1 992.8 712.6 994.7 712.6 C996.2 712.6 997.6 728.2 999.1 730.1 C1001.6 733.4 1004.1 735.1 1006.6 735.1 C1009.1 735.1 1011.6 732.6 1014.1 732.6 C1017.0 732.6 1020.0 732.6 1022.9 732.6 C1025.8 732.6 1028.7 735.7 1031.6 735.7 C1034.6 735.7 1037.5 735.5 1040.4 735.1 C1042.9 734.8 1045.4 734.7 1047.9 733.9 C1049.6 733.3 1051.3 727.6 1052.9 727.6 C1054.6 727.6 1056.3 735.7 1058.0 735.7 C1062.5 735.7 1067.1 735.7 1071.7 735.7 C1077.0 735.7 1082.3 736.4 1087.5 736.4 C1089.2 736.4 1090.9 730.9 1092.5 730.1 C1094.2 729.3 1095.9 728.9 1097.5 728.9 C1100.0 728.9 1102.5 732.6 1105.1 732.6 C1107.1 732.6 1109.2 727.6 1111.3 727.6 C1114.7 727.6 1118.0 727.6 1121.3 727.6 C1124.3 727.6 1127.2 730.1 1130.1 730.1 C1131.8 730.1 1133.4 729.3 1135.1 727.6 C1136.8 725.9 1138.5 714.4 1140.1 714.4 C1141.4 714.4 1142.6 732.6 1143.9 732.6 C1145.3 732.6 1146.8 732.6 1148.3 732.6 C1152.7 732.6 1157.0 735.7 1161.4 735.7 C1163.5 735.7 1165.6 728.8 1167.7 726.3 C1170.6 722.9 1173.5 724.3 1176.5 720.1 C1178.1 717.7 1179.8 691.9 1181.5 691.9 C1182.7 691.9 1184.0 715.1 1185.2 720.1 C1187.7 730.1 1190.2 735.1 1192.7 735.1 C1194.4 735.1 1196.1 704.4 1197.8 704.4 C1199.0 704.4 1200.3 730.1 1201.5 730.1 C1202.3 730.1 1203.2 730.1 1204.0 730.1 C1206.9 730.1 1209.9 699.4 1212.8 699.4 C1214.0 699.4 1215.3 728.9 1216.5 728.9 C1218.6 728.9 1220.7 727.6 1222.8 727.6 C1223.6 727.6 1224.5 733.9 1225.3 733.9 C1227.0 733.9 1228.6 730.5 1230.3 728.9 C1233.7 725.7 1237.0 720.1 1240.3 720.1 C1242.8 720.1 1245.4 723.8 1247.9 726.3 C1250.4 728.9 1252.9 735.1 1255.4 735.1 C1257.0 735.1 1258.7 705.7 1260.4 705.7 C1261.6 705.7 1262.9 735.7 1264.1 735.7 C1267.5 735.7 1270.8 733.9 1274.2 732.6 C1277.1 731.5 1280.0 728.9 1282.9 728.9 C1286.3 728.9 1289.6 729.3 1293.0 730.1 C1295.5 730.7 1298.0 733.9 1300.5 733.9 C1303.4 733.9 1306.3 733.9 1309.2 733.9 C1311.7 733.9 1314.2 732.2 1316.8 731.4" stroke="#8d9faa" stroke-width="1.6" fill="none" stroke-dasharray="0.1 2.8" stroke-linecap="round"/><path d="M854.4 718.8 C855.4 721.8 856.5 725.2 857.5 727.6 C859.6 732.4 861.7 735.7 863.8 735.7 C865.9 735.7 868.0 731.4 870.1 731.4 C871.7 731.4 873.4 735.7 875.1 735.7 C876.7 735.7 878.4 725.7 880.1 725.7 C881.7 725.7 883.4 730.5 885.1 731.4 C886.8 732.2 888.4 732.6 890.1 732.6 C891.8 732.6 893.4 731.4 895.1 731.4 C897.2 731.4 899.3 732.6 901.4 732.6 C903.0 732.6 904.7 727.0 906.4 727.0 C907.6 727.0 908.9 733.9 910.1 733.9 C912.2 733.9 914.3 732.4 916.4 730.1 C918.1 728.3 919.7 722.6 921.4 722.6 C923.1 722.6 924.8 736.4 926.4 736.4 C928.5 736.4 930.6 736.2 932.7 735.7 C934.4 735.4 936.0 731.4 937.7 731.4 C939.4 731.4 941.0 732.6 942.7 732.6 C944.4 732.6 946.0 727.0 947.7 727.0 C949.4 727.0 951.1 734.5 952.7 734.5 C956.1 734.5 959.4 734.3 962.8 733.9 C964.8 733.6 966.9 731.4 969.0 731.4 C970.5 731.4 971.9 737.0 973.4 737.0 C975.3 737.0 977.2 724.5 979.0 724.5 C980.5 724.5 982.0 735.7 983.4 735.7 C985.7 735.7 988.0 731.8 990.3 730.7 C992.0 730.0 993.6 730.3 995.3 729.5 C996.8 728.7 998.2 725.1 999.7 725.1 C1003.3 725.1 1006.8 732.6 1010.4 732.6 C1012.0 732.6 1013.7 731.2 1015.4 730.7 C1017.9 730.0 1020.4 730.3 1022.9 729.5 C1025.4 728.6 1027.9 723.2 1030.4 723.2 C1032.1 723.2 1033.7 733.9 1035.4 733.9 C1037.5 733.9 1039.6 723.2 1041.7 723.2 C1043.3 723.2 1045.0 726.0 1046.7 727.0 C1048.3 727.9 1050.0 728.0 1051.7 728.9 C1053.4 729.7 1055.0 732.0 1056.7 732.0 C1058.8 732.0 1060.9 730.1 1063.0 730.1 C1064.4 730.1 1065.9 730.7 1067.3 730.7 C1069.0 730.7 1070.7 714.4 1072.4 714.4 C1074.0 714.4 1075.7 729.6 1077.4 730.1 C1079.9 730.9 1082.5 730.5 1085.0 731.4 C1087.5 732.2 1090.0 736.4 1092.5 736.4 C1094.6 736.4 1096.7 734.5 1098.8 732.6 C1100.5 731.1 1102.1 729.6 1103.8 727.0 C1105.5 724.4 1107.1 717.0 1108.8 717.0 C1110.5 717.0 1112.2 721.6 1113.8 723.8 C1115.1 725.5 1116.3 727.5 1117.6 728.9 C1120.1 731.6 1122.6 733.2 1125.1 733.2 C1126.8 733.2 1128.4 731.4 1130.1 731.4 C1131.8 731.4 1133.4 733.9 1135.1 733.9 C1137.2 733.9 1139.3 733.0 1141.4 731.4 C1142.6 730.4 1143.9 725.7 1145.1 725.7 C1146.6 725.7 1148.1 733.9 1149.5 733.9 C1151.4 733.9 1153.3 733.7 1155.2 733.2 C1157.0 732.8 1158.9 730.1 1160.8 730.1 C1162.7 730.1 1164.6 735.7 1166.4 735.7 C1168.5 735.7 1170.6 735.1 1172.7 733.9 C1173.9 733.1 1175.2 731.7 1176.5 730.7 C1178.3 729.2 1180.2 726.3 1182.1 726.3 C1184.0 726.3 1185.8 729.6 1187.7 731.4 C1189.0 732.6 1190.2 735.1 1191.5 735.1 C1193.6 735.1 1195.7 733.9 1197.8 733.9 C1199.4 733.9 1201.1 735.7 1202.8 735.7 C1204.4 735.7 1206.1 732.9 1207.8 732.6 C1210.3 732.2 1212.8 732.4 1215.3 732.0 C1216.5 731.8 1217.8 731.4 1219.0 730.1 C1220.5 728.6 1222.0 720.1 1223.4 720.1 C1225.1 720.1 1226.8 735.7 1228.4 735.7 C1230.7 735.7 1233.0 735.5 1235.3 735.1 C1237.8 734.7 1240.3 732.9 1242.8 731.4 C1244.9 730.1 1247.0 727.0 1249.1 727.0 C1251.2 727.0 1253.3 731.3 1255.4 732.6 C1257.0 733.6 1258.7 734.5 1260.4 734.5 C1261.6 734.5 1262.9 732.0 1264.1 732.0 C1265.8 732.0 1267.5 733.9 1269.2 733.9 C1272.1 733.9 1275.0 733.9 1277.9 733.9 C1280.4 733.9 1282.9 731.4 1285.4 731.4 C1287.5 731.4 1289.6 734.5 1291.7 734.5 C1293.4 734.5 1295.0 731.4 1296.7 731.4 C1298.8 731.4 1300.9 732.9 1303.0 733.9 C1304.2 734.4 1305.5 735.7 1306.7 735.7 C1308.8 735.7 1310.9 735.5 1313.0 735.1 C1314.2 734.9 1315.5 732.6 1316.8 731.4" stroke="#4499cb" stroke-width="2" fill="none" stroke-linejoin="round"/></svg>
<div class="abs" style="left:927.6px;top:789px;width:11.5px;height:2px;background:#4499cb;border-radius:1px"></div>
<div class="t" style="left:944.3px;top:786.0px;font-size:10px;line-height:10px;font-weight:400;color:#616161;">12 Feb–12 May 2025</div>
<svg class="abs" style="left:1053.5px;top:788px" width="14" height="4"><path d="M1 2 H13" stroke="#9ab8cc" stroke-width="1.3" stroke-dasharray="0.1 3" stroke-linecap="round"/></svg>
<div class="t" style="left:1072.0px;top:786.0px;font-size:10px;line-height:10px;font-weight:400;color:#616161;">14 Nov 2024–11 Feb 2025</div>
<div class="card" style="left:1350px;top:585.5px;width:545px;height:229px"></div>
<div class="t" style="left:1365.0px;top:603.0px;font-size:12.8px;line-height:12.8px;font-weight:400;color:#303030;-webkit-text-stroke:0.42px #303030;">Total sales by product</div>
<div class="abs" style="left:1365px;top:615.5px;width:124px;height:1px;background-image:linear-gradient(90deg,#b8b8b8 50%,transparent 50%);background-size:2px 1px"></div>
<div class="t" style="left:1364.4px;top:629.0px;font-size:10.5px;line-height:10.5px;font-weight:400;color:#616161;">Diego (Tasmanian Devil - 24cm) · Bocchetta Plush Toys · Tasmanian Devils</div>
<div class="abs" style="left:1364.4px;top:643.5px;width:393.4px;height:29.5px;background:#c4e4f7;border-radius:0 3px 3px 0"></div>
<div class="abs" style="left:1364.4px;top:676px;width:353.6px;height:29.3px;background:#93c7e8;border-radius:0 3px 3px 0"></div>
<div class="t" style="left:1766.7px;top:655.0px;font-size:10.4px;line-height:10.4px;font-weight:400;color:#616161;">A$4,335.41</div>
<svg class="abs" style="left:1829.5px;top:655.5px" width="6" height="6" viewBox="0 0 6 6"><path d="M1 5 L3.8 2.2" stroke="#29845a" stroke-width="1.5" stroke-linecap="round"/><path d="M1.6 0.6 H5.4 V4.4 Z" fill="#29845a"/></svg>
<div class="t" style="left:1838.8px;top:655.0px;font-size:10px;line-height:10px;font-weight:700;color:#29845a;letter-spacing:0.5px">11%</div>
<div class="t" style="left:1728.0px;top:686.0px;font-size:10.4px;line-height:10.4px;font-weight:400;color:#616161;">A$3,904.15</div>
<div class="t" style="left:1364.4px;top:724.0px;font-size:10.5px;line-height:10.5px;font-weight:400;color:#616161;">Rimsky (Clydesdale Horse - 30cm) · Bocchetta Plush Toys · Horses</div>
<div class="abs" style="left:1364.4px;top:738px;width:311.4px;height:29.8px;background:#36a7ea;border-radius:0 3px 3px 0"></div>
<div class="abs" style="left:1364.4px;top:770px;width:243.8px;height:29.6px;background:#93c7e8;border-radius:0 3px 3px 0"></div>
<div class="t" style="left:1685.6px;top:749.0px;font-size:10.4px;line-height:10.4px;font-weight:400;color:#616161;">A$3,438.07</div>
<svg class="abs" style="left:1749.8px;top:748.8px" width="6" height="6" viewBox="0 0 6 6"><path d="M1 5 L3.8 2.2" stroke="#29845a" stroke-width="1.5" stroke-linecap="round"/><path d="M1.6 0.6 H5.4 V4.4 Z" fill="#29845a"/></svg>
<div class="t" style="left:1758.5px;top:749.0px;font-size:10px;line-height:10px;font-weight:700;color:#29845a;letter-spacing:0.6px">28%</div>
<div class="t" style="left:1617.7px;top:781.0px;font-size:10.4px;line-height:10.4px;font-weight:400;color:#616161;">A$2,690.17</div>
<div class="card" style="left:230px;top:828.5px;width:546px;height:140px"></div>
<div class="card" style="left:790px;top:828.5px;width:546px;height:140px"></div>
<div class="card" style="left:1350px;top:828.5px;width:545px;height:140px"></div>
<div class="t" style="left:245.0px;top:846.0px;font-size:12.8px;line-height:12.8px;font-weight:400;color:#303030;-webkit-text-stroke:0.42px #303030;">Sessions over time</div>
<div class="abs" style="left:245px;top:858.5px;width:106.3px;height:1px;background-image:linear-gradient(90deg,#b8b8b8 50%,transparent 50%);background-size:2px 1px"></div>
<div class="t" style="left:245.0px;top:871.0px;font-size:18.6px;line-height:18.6px;font-weight:400;color:#303030;-webkit-text-stroke:0.6px #303030;letter-spacing:0.6px">22,457</div>
<svg class="abs" style="left:310.2px;top:876.8px" width="6" height="6" viewBox="0 0 6 6"><path d="M1 5 L3.8 2.2" stroke="#29845a" stroke-width="1.5" stroke-linecap="round"/><path d="M1.6 0.6 H5.4 V4.4 Z" fill="#29845a"/></svg>
<div class="t" style="left:320.0px;top:875.0px;font-size:9.8px;line-height:9.8px;font-weight:700;color:#29845a;letter-spacing:0.25px">70%</div>
<div class="t" style="left:247.0px;top:905.0px;font-size:10px;line-height:10px;font-weight:400;color:#616161;">600</div>
<div class="abs" style="left:286.4px;top:908.5px;width:470.6px;height:1px;background:#ebebeb"></div>
<div class="t" style="left:805.0px;top:846.0px;font-size:12.8px;line-height:12.8px;font-weight:400;color:#303030;-webkit-text-stroke:0.42px #303030;">Conversion rate over time</div>
<div class="abs" style="left:805px;top:858.5px;width:146.5px;height:1px;background-image:linear-gradient(90deg,#b8b8b8 50%,transparent 50%);background-size:2px 1px"></div>
<div class="t" style="left:805.0px;top:871.0px;font-size:18.4px;line-height:18.4px;font-weight:400;color:#303030;-webkit-text-stroke:0.6px #303030;letter-spacing:0.2px">0.72%</div>
<svg class="abs" style="left:867px;top:876.8px" width="6" height="6" viewBox="0 0 6 6"><path d="M1 1 L3.8 3.8" stroke="#616161" stroke-width="1.5" stroke-linecap="round"/><path d="M5.4 1.6 V5.4 H1.6 Z" fill="#616161"/></svg>
<div class="t" style="left:874.0px;top:875.0px;font-size:9.8px;line-height:9.8px;font-weight:700;color:#616161;letter-spacing:0.25px">50%</div>
<div class="t" style="left:807.0px;top:905.0px;font-size:10px;line-height:10px;font-weight:400;color:#616161;">6%</div>
<div class="abs" style="left:843.5px;top:908.5px;width:473.5px;height:1px;background:#ebebeb"></div>
<div class="t" style="left:1365.0px;top:846.0px;font-size:12.8px;line-height:12.8px;font-weight:400;color:#303030;-webkit-text-stroke:0.42px #303030;">Conversion rate breakdown</div>
<div class="abs" style="left:1365px;top:858.5px;width:155px;height:1px;background-image:linear-gradient(90deg,#b8b8b8 50%,transparent 50%);background-size:2px 1px"></div>
<div class="t" style="left:1365.0px;top:871.0px;font-size:18.4px;line-height:18.4px;font-weight:400;color:#303030;-webkit-text-stroke:0.6px #303030;letter-spacing:0.2px">0.72%</div>
<svg class="abs" style="left:1425px;top:876.5px" width="6" height="6" viewBox="0 0 6 6"><path d="M1 1 L3.8 3.8" stroke="#616161" stroke-width="1.5" stroke-linecap="round"/><path d="M5.4 1.6 V5.4 H1.6 Z" fill="#616161"/></svg>
<div class="t" style="left:1434.5px;top:875.0px;font-size:9.8px;line-height:9.8px;font-weight:700;color:#616161;letter-spacing:0.25px">50%</div>
<div class="abs" style="left:1500.6px;top:905px;width:1px;height:41px;background:#e3e3e3"></div>
<div class="abs" style="left:1637px;top:905px;width:1px;height:41px;background:#e3e3e3"></div>
<div class="abs" style="left:1774px;top:905px;width:1px;height:41px;background:#e3e3e3"></div>
<div class="abs" style="left:1364px;top:910.5px;width:14px;height:14px;border-radius:50%;background:#f1f1f1"></div>
<svg class="abs" style="left:1366px;top:912px" width="10" height="12" viewBox="0 0 10 12"><path d="M6.5 0.8 L3.5 11.2 M1.5 4.3 H8.5 M1.5 7.7 H8.5" stroke="#303030" stroke-width="1.4" fill="none" stroke-linecap="round"/></svg>
<div class="t" style="left:1382.8px;top:912.0px;font-size:11.2px;line-height:11.2px;font-weight:400;color:#303030;">Sessions</div>
<div class="t" style="left:1365.0px;top:930.0px;font-size:12.6px;line-height:12.6px;font-weight:400;color:#303030;-webkit-text-stroke:0.45px #303030;letter-spacing:0.4px">100%</div>
<div class="t" style="left:1404.6px;top:930.0px;font-size:12.2px;line-height:12.2px;font-weight:400;color:#616161;">22,457</div>
<div class="t" style="left:1511.0px;top:912.0px;font-size:11.2px;line-height:11.2px;font-weight:400;color:#303030;">Added to cart</div>
<div class="t" style="left:1511.0px;top:930.0px;font-size:12.6px;line-height:12.6px;font-weight:400;color:#303030;-webkit-text-stroke:0.45px #303030;letter-spacing:0.75px">5.24%</div>
<div class="t" style="left:1556.0px;top:930.0px;font-size:12.2px;line-height:12.2px;font-weight:400;color:#616161;">1,177</div>
<div class="t" style="left:1648.0px;top:912.0px;font-size:11.2px;line-height:11.2px;font-weight:400;color:#303030;">Reached checkout</div>
<div class="t" style="left:1648.0px;top:930.0px;font-size:12.6px;line-height:12.6px;font-weight:400;color:#303030;-webkit-text-stroke:0.45px #303030;letter-spacing:0.75px">2.33%</div>
<div class="t" style="left:1693.0px;top:930.0px;font-size:12.2px;line-height:12.2px;font-weight:400;color:#616161;">524</div>
<div class="t" style="left:1785.0px;top:912.0px;font-size:11.2px;line-height:11.2px;font-weight:400;color:#303030;">Completed che...</div>
<div class="t" style="left:1785.0px;top:930.0px;font-size:12.6px;line-height:12.6px;font-weight:400;color:#303030;-webkit-text-stroke:0.45px #303030;letter-spacing:0.75px">0.72%</div>
<div class="t" style="left:1829.3px;top:930.0px;font-size:12.2px;line-height:12.2px;font-weight:400;color:#616161;">162</div>
<div class="abs" style="left:1513.4px;top:886.2px;width:278.6px;height:44.5px;background:rgba(255,255,255,0.62);border-radius:4px;box-shadow:0 0 2px rgba(0,0,0,0.12)"></div>
<div class="t" style="left:1522.3px;top:895.0px;font-size:11.6px;line-height:11.6px;font-weight:400;color:#707070;letter-spacing:0.24px">Press the "Prnt Scrn" on your keyboard to take a</div>
<div class="t" style="left:1522.3px;top:911.0px;font-size:11.6px;line-height:11.6px;font-weight:400;color:#707070;letter-spacing:0.24px">screenshot</div>
<div class="abs" style="left:1911px;top:50px;width:5px;height:896px;background:#f1f1f1"></div>
<div class="abs" style="left:1912px;top:62px;width:4px;height:283px;background:#bdbdbd;border-radius:2px"></div>
<svg class="abs" style="left:1910px;top:52px" width="6" height="5"><path d="M0.5 4.5 L3 0.5 L5.5 4.5 Z" fill="#a8a8a8"/></svg>
<svg class="abs" style="left:1910px;top:938px" width="6" height="5"><path d="M0.5 0.5 L3 4.5 L5.5 0.5 Z" fill="#a8a8a8"/></svg>
<div class="abs" style="left:0;top:945px;width:1916px;height:1px;background:#b1b1b5"></div>
</body></html>
